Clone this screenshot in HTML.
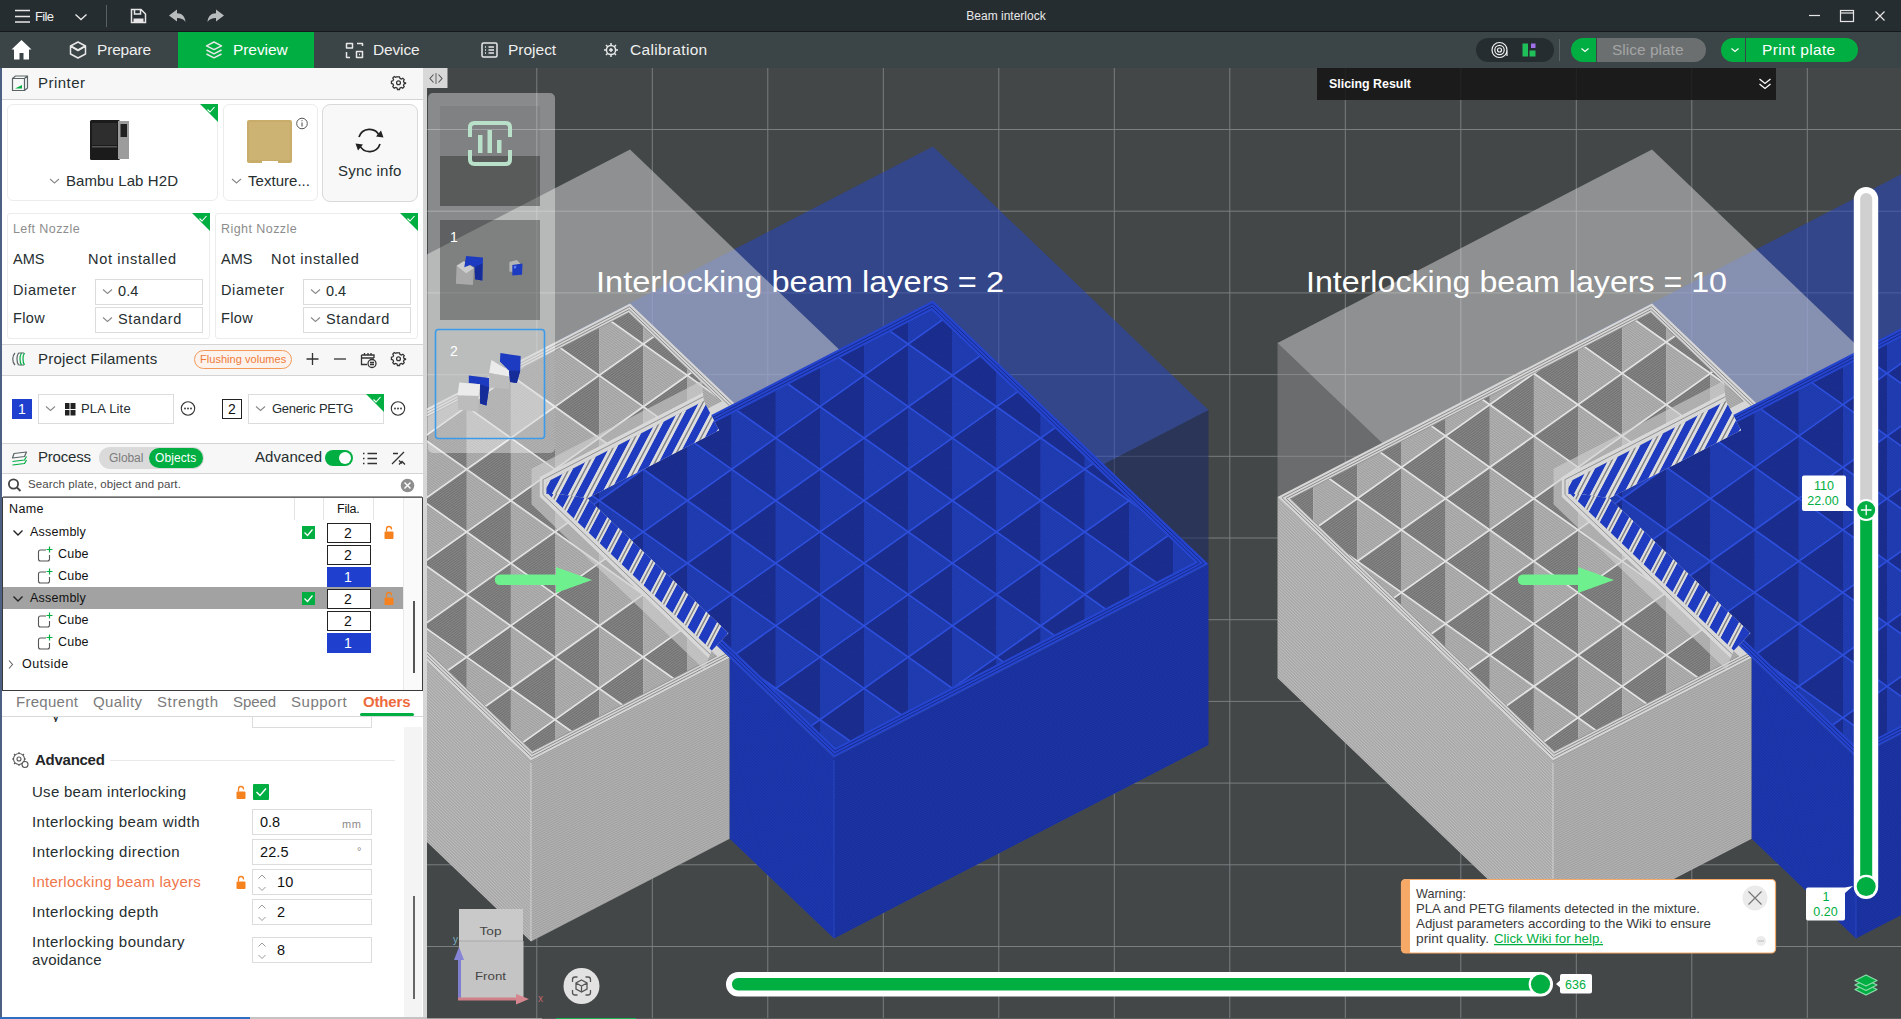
<!DOCTYPE html>
<html><head><meta charset="utf-8"><title>Beam interlock</title>
<style>
*{box-sizing:border-box;margin:0;padding:0}
html,body{width:1901px;height:1019px;overflow:hidden;background:#434748;font-family:"Liberation Sans",sans-serif;color:#262e30}
.abs{position:absolute}
#titlebar{left:0;top:0;width:1901px;height:32px;background:#262d30;border-bottom:1px solid #15191b}
#tabbar{left:0;top:32px;width:1901px;height:36px;background:#3b4446}
.t{position:absolute;white-space:nowrap;line-height:1}
#left{left:0;top:68px;width:427px;height:951px;background:#d6d6d6}
#leftin{left:2px;top:68px;width:421px;height:949px;background:#fff}
.hdr{position:absolute;left:2px;width:421px;background:#f7f7f7;border-bottom:1px solid #d4d4d4}
.card{position:absolute;border:1px solid #ececec;border-radius:6px;background:#fff}
.gc{position:absolute;width:0;height:0;border-top:18px solid #00ae42;border-left:18px solid transparent}
.dd{position:absolute;border:1px solid #dcdcdc;background:#fff}
.inp{position:absolute;left:252px;width:120px;height:26px;border:1px solid #dcdcdc;background:#fff}
svg{position:absolute;overflow:visible}
</style></head><body>
<!-- SCENE -->
<svg id="scene" style="left:427px;top:68px" width="1474" height="951" viewBox="427 68 1474 951">
<defs><pattern id="hgl" width="40" height="2.2" patternUnits="userSpaceOnUse" patternTransform="rotate(43.72460892256163)"><rect width="40" height="2.2" fill="#a4a4a4"/><rect width="40" height="1.0" fill="#bebebe"/></pattern><pattern id="hgr" width="40" height="2.0" patternUnits="userSpaceOnUse" patternTransform="rotate(-27.324897602688495)"><rect width="40" height="2.0" fill="#9f9f9f"/><rect width="40" height="1.0" fill="#b3b3b3"/></pattern><pattern id="hbl" width="40" height="2.2" patternUnits="userSpaceOnUse" patternTransform="rotate(43.72460892256163)"><rect width="40" height="2.2" fill="#1931a2"/><rect width="40" height="1.0" fill="#1e39b1"/></pattern><pattern id="hbr" width="40" height="2.0" patternUnits="userSpaceOnUse" patternTransform="rotate(-27.324897602688495)"><rect width="40" height="2.0" fill="#172d98"/><rect width="40" height="1.0" fill="#1d36a6"/></pattern><pattern id="hgd" width="40" height="2.0" patternUnits="userSpaceOnUse" patternTransform="rotate(-35.33461122477693)"><rect width="40" height="2.0" fill="#707070"/><rect width="40" height="1.0" fill="#888888"/></pattern><pattern id="hgt" width="40" height="2.0" patternUnits="userSpaceOnUse" patternTransform="rotate(35.33461122477693)"><rect width="40" height="2.0" fill="#9e9e9e"/><rect width="40" height="1.0" fill="#b4b4b4"/></pattern><pattern id="hbd" width="40" height="2.0" patternUnits="userSpaceOnUse" patternTransform="rotate(-35.33461122477693)"><rect width="40" height="2.0" fill="#182986"/><rect width="40" height="1.0" fill="#1c3094"/></pattern><pattern id="hbt" width="40" height="2.0" patternUnits="userSpaceOnUse" patternTransform="rotate(35.33461122477693)"><rect width="40" height="2.0" fill="#1d37a6"/><rect width="40" height="1.0" fill="#213fb8"/></pattern><clipPath id="cg0"><polygon points="628.7,312.6 268.3,498.8 532.3,751.4 716.9,656.0 545.7,492.3 721.5,401.4"/></clipPath><clipPath id="cb0"><polygon points="931.6,310.3 572.1,496.1 835.4,747.9 1194.9,562.1"/></clipPath><clipPath id="ci0"><polygon points="703.9,401.0 546.5,482.3 546.5,494.1 558.5,494.1 587.5,498.3 719.0,430.3"/></clipPath><clipPath id="cj0"><polygon points="546.5,494.1 546.5,492.3 711.8,650.5 728.4,633.1 587.5,498.3 558.5,494.1"/></clipPath><clipPath id="cg1"><polygon points="1650.7,312.6 1290.3,498.8 1554.3,751.4 1738.9,656.0 1567.7,492.3 1743.5,401.4"/></clipPath><clipPath id="cb1"><polygon points="1953.6,310.3 1594.1,496.1 1857.4,747.9 2216.9,562.1"/></clipPath><clipPath id="ci1"><polygon points="1725.9,401.0 1568.5,482.3 1568.5,494.1 1580.5,494.1 1609.5,498.3 1741.0,430.3"/></clipPath><clipPath id="cj1"><polygon points="1568.5,494.1 1568.5,492.3 1733.8,650.5 1750.4,633.1 1609.5,498.3 1580.5,494.1"/></clipPath></defs>
<path d="M536.8,68V1019M652.3,68V1019M767.8,68V1019M883.3,68V1019M998.8,68V1019M1114.3,68V1019M1229.8,68V1019M1345.3,68V1019M1460.8,68V1019M1576.3,68V1019M1691.8,68V1019M1807.3,68V1019M427,129.5H1901M427,211.2H1901M427,292.9H1901M427,374.6H1901M427,456.3H1901M427,538.0H1901M427,619.7H1901M427,701.4H1901M427,783.1H1901M427,864.8H1901M427,946.5H1901M427,1028.2H1901" stroke="#7a7e7f" stroke-width="1" fill="none"/>
<polygon points="834.0,603.6 1208.5,410.1 1208.5,564.1 834.0,757.6" fill="rgba(22,38,101,0.55)" />
<polygon points="933.0,146.6 558.5,340.1 834.0,603.6 1208.5,410.1" fill="rgba(38,69,192,0.55)" />
<polygon points="255.5,343.0 531.0,606.5 531.0,760.5 255.5,497.0" fill="rgba(145,145,145,0.5)" />
<polygon points="630.0,149.5 255.5,343.0 531.0,606.5 905.5,413.0" fill="rgba(217,217,217,0.5)" />
<polygon points="255.5,497.0 531.0,760.5 531.0,941.5 255.5,678.0" fill="url(#hgl)" />
<polygon points="531.0,760.5 729.7,657.8 729.7,838.8 531.0,941.5" fill="url(#hgr)" />
<path d="M531.0,763.5V941.5" stroke="#e8e8e8" stroke-width="1.2" stroke-dasharray="1,1"/>
<polygon points="630.0,303.5 255.5,497.0 531.0,760.5 729.7,657.8 558.5,494.1 734.3,403.3" fill="#d6d6d6" />
<g clip-path="url(#cg0)">
<path d="M113.5,218.9L157.7,187.6L157.7,250.2ZM113.5,281.5L157.7,250.2L157.7,312.8ZM113.5,344.1L157.7,312.8L157.7,375.4ZM113.5,406.7L157.7,375.4L157.7,438.0ZM113.5,469.3L157.7,438.0L157.7,500.6ZM113.5,531.9L157.7,500.6L157.7,563.2ZM113.5,594.5L157.7,563.2L157.7,625.8ZM113.5,657.1L157.7,625.8L157.7,688.4ZM113.5,719.7L157.7,688.4L157.7,751.0ZM113.5,782.3L157.7,751.0L157.7,813.6ZM113.5,844.9L157.7,813.6L157.7,876.2ZM157.7,250.2L201.8,218.9L201.8,281.5ZM157.7,312.8L201.8,281.5L201.8,344.1ZM157.7,375.4L201.8,344.1L201.8,406.7ZM157.7,438.0L201.8,406.7L201.8,469.3ZM157.7,500.6L201.8,469.3L201.8,531.9ZM157.7,563.2L201.8,531.9L201.8,594.5ZM157.7,625.8L201.8,594.5L201.8,657.1ZM157.7,688.4L201.8,657.1L201.8,719.7ZM157.7,751.0L201.8,719.7L201.8,782.3ZM157.7,813.6L201.8,782.3L201.8,844.9ZM201.8,218.9L246.0,187.6L246.0,250.2ZM201.8,281.5L246.0,250.2L246.0,312.8ZM201.8,344.1L246.0,312.8L246.0,375.4ZM201.8,406.7L246.0,375.4L246.0,438.0ZM201.8,469.3L246.0,438.0L246.0,500.6ZM201.8,531.9L246.0,500.6L246.0,563.2ZM201.8,594.5L246.0,563.2L246.0,625.8ZM201.8,657.1L246.0,625.8L246.0,688.4ZM201.8,719.7L246.0,688.4L246.0,751.0ZM201.8,782.3L246.0,751.0L246.0,813.6ZM201.8,844.9L246.0,813.6L246.0,876.2ZM246.0,250.2L290.1,218.9L290.1,281.5ZM246.0,312.8L290.1,281.5L290.1,344.1ZM246.0,375.4L290.1,344.1L290.1,406.7ZM246.0,438.0L290.1,406.7L290.1,469.3ZM246.0,500.6L290.1,469.3L290.1,531.9ZM246.0,563.2L290.1,531.9L290.1,594.5ZM246.0,625.8L290.1,594.5L290.1,657.1ZM246.0,688.4L290.1,657.1L290.1,719.7ZM246.0,751.0L290.1,719.7L290.1,782.3ZM246.0,813.6L290.1,782.3L290.1,844.9ZM290.1,218.9L334.3,187.6L334.3,250.2ZM290.1,281.5L334.3,250.2L334.3,312.8ZM290.1,344.1L334.3,312.8L334.3,375.4ZM290.1,406.7L334.3,375.4L334.3,438.0ZM290.1,469.3L334.3,438.0L334.3,500.6ZM290.1,531.9L334.3,500.6L334.3,563.2ZM290.1,594.5L334.3,563.2L334.3,625.8ZM290.1,657.1L334.3,625.8L334.3,688.4ZM290.1,719.7L334.3,688.4L334.3,751.0ZM290.1,782.3L334.3,751.0L334.3,813.6ZM290.1,844.9L334.3,813.6L334.3,876.2ZM334.3,250.2L378.4,218.9L378.4,281.5ZM334.3,312.8L378.4,281.5L378.4,344.1ZM334.3,375.4L378.4,344.1L378.4,406.7ZM334.3,438.0L378.4,406.7L378.4,469.3ZM334.3,500.6L378.4,469.3L378.4,531.9ZM334.3,563.2L378.4,531.9L378.4,594.5ZM334.3,625.8L378.4,594.5L378.4,657.1ZM334.3,688.4L378.4,657.1L378.4,719.7ZM334.3,751.0L378.4,719.7L378.4,782.3ZM334.3,813.6L378.4,782.3L378.4,844.9ZM378.4,218.9L422.6,187.6L422.6,250.2ZM378.4,281.5L422.6,250.2L422.6,312.8ZM378.4,344.1L422.6,312.8L422.6,375.4ZM378.4,406.7L422.6,375.4L422.6,438.0ZM378.4,469.3L422.6,438.0L422.6,500.6ZM378.4,531.9L422.6,500.6L422.6,563.2ZM378.4,594.5L422.6,563.2L422.6,625.8ZM378.4,657.1L422.6,625.8L422.6,688.4ZM378.4,719.7L422.6,688.4L422.6,751.0ZM378.4,782.3L422.6,751.0L422.6,813.6ZM378.4,844.9L422.6,813.6L422.6,876.2ZM422.6,250.2L466.8,218.9L466.8,281.5ZM422.6,312.8L466.8,281.5L466.8,344.1ZM422.6,375.4L466.8,344.1L466.8,406.7ZM422.6,438.0L466.8,406.7L466.8,469.3ZM422.6,500.6L466.8,469.3L466.8,531.9ZM422.6,563.2L466.8,531.9L466.8,594.5ZM422.6,625.8L466.8,594.5L466.8,657.1ZM422.6,688.4L466.8,657.1L466.8,719.7ZM422.6,751.0L466.8,719.7L466.8,782.3ZM422.6,813.6L466.8,782.3L466.8,844.9ZM466.8,218.9L510.9,187.6L510.9,250.2ZM466.8,281.5L510.9,250.2L510.9,312.8ZM466.8,344.1L510.9,312.8L510.9,375.4ZM466.8,406.7L510.9,375.4L510.9,438.0ZM466.8,469.3L510.9,438.0L510.9,500.6ZM466.8,531.9L510.9,500.6L510.9,563.2ZM466.8,594.5L510.9,563.2L510.9,625.8ZM466.8,657.1L510.9,625.8L510.9,688.4ZM466.8,719.7L510.9,688.4L510.9,751.0ZM466.8,782.3L510.9,751.0L510.9,813.6ZM466.8,844.9L510.9,813.6L510.9,876.2ZM510.9,250.2L555.0,218.9L555.0,281.5ZM510.9,312.8L555.0,281.5L555.0,344.1ZM510.9,375.4L555.0,344.1L555.0,406.7ZM510.9,438.0L555.0,406.7L555.0,469.3ZM510.9,500.6L555.0,469.3L555.0,531.9ZM510.9,563.2L555.0,531.9L555.0,594.5ZM510.9,625.8L555.0,594.5L555.0,657.1ZM510.9,688.4L555.0,657.1L555.0,719.7ZM510.9,751.0L555.0,719.7L555.0,782.3ZM510.9,813.6L555.0,782.3L555.0,844.9ZM555.0,218.9L599.2,187.6L599.2,250.2ZM555.0,281.5L599.2,250.2L599.2,312.8ZM555.0,344.1L599.2,312.8L599.2,375.4ZM555.0,406.7L599.2,375.4L599.2,438.0ZM555.0,469.3L599.2,438.0L599.2,500.6ZM555.0,531.9L599.2,500.6L599.2,563.2ZM555.0,594.5L599.2,563.2L599.2,625.8ZM555.0,657.1L599.2,625.8L599.2,688.4ZM555.0,719.7L599.2,688.4L599.2,751.0ZM555.0,782.3L599.2,751.0L599.2,813.6ZM555.0,844.9L599.2,813.6L599.2,876.2ZM599.2,250.2L643.3,218.9L643.3,281.5ZM599.2,312.8L643.3,281.5L643.3,344.1ZM599.2,375.4L643.3,344.1L643.3,406.7ZM599.2,438.0L643.3,406.7L643.3,469.3ZM599.2,500.6L643.3,469.3L643.3,531.9ZM599.2,563.2L643.3,531.9L643.3,594.5ZM599.2,625.8L643.3,594.5L643.3,657.1ZM599.2,688.4L643.3,657.1L643.3,719.7ZM599.2,751.0L643.3,719.7L643.3,782.3ZM599.2,813.6L643.3,782.3L643.3,844.9ZM643.4,218.9L687.5,187.6L687.5,250.2ZM643.4,281.5L687.5,250.2L687.5,312.8ZM643.4,344.1L687.5,312.8L687.5,375.4ZM643.4,406.7L687.5,375.4L687.5,438.0ZM643.4,469.3L687.5,438.0L687.5,500.6ZM643.4,531.9L687.5,500.6L687.5,563.2ZM643.4,594.5L687.5,563.2L687.5,625.8ZM643.4,657.1L687.5,625.8L687.5,688.4ZM643.4,719.7L687.5,688.4L687.5,751.0ZM643.4,782.3L687.5,751.0L687.5,813.6ZM643.4,844.9L687.5,813.6L687.5,876.2ZM687.5,250.2L731.6,218.9L731.6,281.5ZM687.5,312.8L731.6,281.5L731.6,344.1ZM687.5,375.4L731.6,344.1L731.6,406.7ZM687.5,438.0L731.6,406.7L731.6,469.3ZM687.5,500.6L731.6,469.3L731.6,531.9ZM687.5,563.2L731.6,531.9L731.6,594.5ZM687.5,625.8L731.6,594.5L731.6,657.1ZM687.5,688.4L731.6,657.1L731.6,719.7ZM687.5,751.0L731.6,719.7L731.6,782.3ZM687.5,813.6L731.6,782.3L731.6,844.9ZM731.6,218.9L775.8,187.6L775.8,250.2ZM731.6,281.5L775.8,250.2L775.8,312.8ZM731.6,344.1L775.8,312.8L775.8,375.4ZM731.6,406.7L775.8,375.4L775.8,438.0ZM731.6,469.3L775.8,438.0L775.8,500.6ZM731.6,531.9L775.8,500.6L775.8,563.2ZM731.6,594.5L775.8,563.2L775.8,625.8ZM731.6,657.1L775.8,625.8L775.8,688.4ZM731.6,719.7L775.8,688.4L775.8,751.0ZM731.6,782.3L775.8,751.0L775.8,813.6ZM731.6,844.9L775.8,813.6L775.8,876.2ZM775.8,250.2L820.0,218.9L820.0,281.5ZM775.8,312.8L820.0,281.5L820.0,344.1ZM775.8,375.4L820.0,344.1L820.0,406.7ZM775.8,438.0L820.0,406.7L820.0,469.3ZM775.8,500.6L820.0,469.3L820.0,531.9ZM775.8,563.2L820.0,531.9L820.0,594.5ZM775.8,625.8L820.0,594.5L820.0,657.1ZM775.8,688.4L820.0,657.1L820.0,719.7ZM775.8,751.0L820.0,719.7L820.0,782.3ZM775.8,813.6L820.0,782.3L820.0,844.9Z" fill="url(#hgd)"/>
<path d="M201.8,218.9L157.7,187.6L157.7,250.2ZM201.8,281.5L157.7,250.2L157.7,312.8ZM201.8,344.1L157.7,312.8L157.7,375.4ZM201.8,406.7L157.7,375.4L157.7,438.0ZM201.8,469.3L157.7,438.0L157.7,500.6ZM201.8,531.9L157.7,500.6L157.7,563.2ZM201.8,594.5L157.7,563.2L157.7,625.8ZM201.8,657.1L157.7,625.8L157.7,688.4ZM201.8,719.7L157.7,688.4L157.7,751.0ZM201.8,782.3L157.7,751.0L157.7,813.6ZM201.8,844.9L157.7,813.6L157.7,876.2ZM246.0,250.2L201.8,218.9L201.8,281.5ZM246.0,312.8L201.8,281.5L201.8,344.1ZM246.0,375.4L201.8,344.1L201.8,406.7ZM246.0,438.0L201.8,406.7L201.8,469.3ZM246.0,500.6L201.8,469.3L201.8,531.9ZM246.0,563.2L201.8,531.9L201.8,594.5ZM246.0,625.8L201.8,594.5L201.8,657.1ZM246.0,688.4L201.8,657.1L201.8,719.7ZM246.0,751.0L201.8,719.7L201.8,782.3ZM246.0,813.6L201.8,782.3L201.8,844.9ZM290.1,218.9L246.0,187.6L246.0,250.2ZM290.1,281.5L246.0,250.2L246.0,312.8ZM290.1,344.1L246.0,312.8L246.0,375.4ZM290.1,406.7L246.0,375.4L246.0,438.0ZM290.1,469.3L246.0,438.0L246.0,500.6ZM290.1,531.9L246.0,500.6L246.0,563.2ZM290.1,594.5L246.0,563.2L246.0,625.8ZM290.1,657.1L246.0,625.8L246.0,688.4ZM290.1,719.7L246.0,688.4L246.0,751.0ZM290.1,782.3L246.0,751.0L246.0,813.6ZM290.1,844.9L246.0,813.6L246.0,876.2ZM334.3,250.2L290.1,218.9L290.1,281.5ZM334.3,312.8L290.1,281.5L290.1,344.1ZM334.3,375.4L290.1,344.1L290.1,406.7ZM334.3,438.0L290.1,406.7L290.1,469.3ZM334.3,500.6L290.1,469.3L290.1,531.9ZM334.3,563.2L290.1,531.9L290.1,594.5ZM334.3,625.8L290.1,594.5L290.1,657.1ZM334.3,688.4L290.1,657.1L290.1,719.7ZM334.3,751.0L290.1,719.7L290.1,782.3ZM334.3,813.6L290.1,782.3L290.1,844.9ZM378.4,218.9L334.3,187.6L334.3,250.2ZM378.4,281.5L334.3,250.2L334.3,312.8ZM378.4,344.1L334.3,312.8L334.3,375.4ZM378.4,406.7L334.3,375.4L334.3,438.0ZM378.4,469.3L334.3,438.0L334.3,500.6ZM378.4,531.9L334.3,500.6L334.3,563.2ZM378.4,594.5L334.3,563.2L334.3,625.8ZM378.4,657.1L334.3,625.8L334.3,688.4ZM378.4,719.7L334.3,688.4L334.3,751.0ZM378.4,782.3L334.3,751.0L334.3,813.6ZM378.4,844.9L334.3,813.6L334.3,876.2ZM422.6,250.2L378.4,218.9L378.4,281.5ZM422.6,312.8L378.4,281.5L378.4,344.1ZM422.6,375.4L378.4,344.1L378.4,406.7ZM422.6,438.0L378.4,406.7L378.4,469.3ZM422.6,500.6L378.4,469.3L378.4,531.9ZM422.6,563.2L378.4,531.9L378.4,594.5ZM422.6,625.8L378.4,594.5L378.4,657.1ZM422.6,688.4L378.4,657.1L378.4,719.7ZM422.6,751.0L378.4,719.7L378.4,782.3ZM422.6,813.6L378.4,782.3L378.4,844.9ZM466.7,218.9L422.6,187.6L422.6,250.2ZM466.7,281.5L422.6,250.2L422.6,312.8ZM466.7,344.1L422.6,312.8L422.6,375.4ZM466.7,406.7L422.6,375.4L422.6,438.0ZM466.7,469.3L422.6,438.0L422.6,500.6ZM466.7,531.9L422.6,500.6L422.6,563.2ZM466.7,594.5L422.6,563.2L422.6,625.8ZM466.7,657.1L422.6,625.8L422.6,688.4ZM466.7,719.7L422.6,688.4L422.6,751.0ZM466.7,782.3L422.6,751.0L422.6,813.6ZM466.7,844.9L422.6,813.6L422.6,876.2ZM510.9,250.2L466.8,218.9L466.8,281.5ZM510.9,312.8L466.8,281.5L466.8,344.1ZM510.9,375.4L466.8,344.1L466.8,406.7ZM510.9,438.0L466.8,406.7L466.8,469.3ZM510.9,500.6L466.8,469.3L466.8,531.9ZM510.9,563.2L466.8,531.9L466.8,594.5ZM510.9,625.8L466.8,594.5L466.8,657.1ZM510.9,688.4L466.8,657.1L466.8,719.7ZM510.9,751.0L466.8,719.7L466.8,782.3ZM510.9,813.6L466.8,782.3L466.8,844.9ZM555.0,218.9L510.9,187.6L510.9,250.2ZM555.0,281.5L510.9,250.2L510.9,312.8ZM555.0,344.1L510.9,312.8L510.9,375.4ZM555.0,406.7L510.9,375.4L510.9,438.0ZM555.0,469.3L510.9,438.0L510.9,500.6ZM555.0,531.9L510.9,500.6L510.9,563.2ZM555.0,594.5L510.9,563.2L510.9,625.8ZM555.0,657.1L510.9,625.8L510.9,688.4ZM555.0,719.7L510.9,688.4L510.9,751.0ZM555.0,782.3L510.9,751.0L510.9,813.6ZM555.0,844.9L510.9,813.6L510.9,876.2ZM599.2,250.2L555.0,218.9L555.0,281.5ZM599.2,312.8L555.0,281.5L555.0,344.1ZM599.2,375.4L555.0,344.1L555.0,406.7ZM599.2,438.0L555.0,406.7L555.0,469.3ZM599.2,500.6L555.0,469.3L555.0,531.9ZM599.2,563.2L555.0,531.9L555.0,594.5ZM599.2,625.8L555.0,594.5L555.0,657.1ZM599.2,688.4L555.0,657.1L555.0,719.7ZM599.2,751.0L555.0,719.7L555.0,782.3ZM599.2,813.6L555.0,782.3L555.0,844.9ZM643.3,218.9L599.2,187.6L599.2,250.2ZM643.3,281.5L599.2,250.2L599.2,312.8ZM643.3,344.1L599.2,312.8L599.2,375.4ZM643.3,406.7L599.2,375.4L599.2,438.0ZM643.3,469.3L599.2,438.0L599.2,500.6ZM643.3,531.9L599.2,500.6L599.2,563.2ZM643.3,594.5L599.2,563.2L599.2,625.8ZM643.3,657.1L599.2,625.8L599.2,688.4ZM643.3,719.7L599.2,688.4L599.2,751.0ZM643.3,782.3L599.2,751.0L599.2,813.6ZM643.3,844.9L599.2,813.6L599.2,876.2ZM687.5,250.2L643.3,218.9L643.3,281.5ZM687.5,312.8L643.3,281.5L643.3,344.1ZM687.5,375.4L643.3,344.1L643.3,406.7ZM687.5,438.0L643.3,406.7L643.3,469.3ZM687.5,500.6L643.3,469.3L643.3,531.9ZM687.5,563.2L643.3,531.9L643.3,594.5ZM687.5,625.8L643.3,594.5L643.3,657.1ZM687.5,688.4L643.3,657.1L643.3,719.7ZM687.5,751.0L643.3,719.7L643.3,782.3ZM687.5,813.6L643.3,782.3L643.3,844.9ZM731.6,218.9L687.5,187.6L687.5,250.2ZM731.6,281.5L687.5,250.2L687.5,312.8ZM731.6,344.1L687.5,312.8L687.5,375.4ZM731.6,406.7L687.5,375.4L687.5,438.0ZM731.6,469.3L687.5,438.0L687.5,500.6ZM731.6,531.9L687.5,500.6L687.5,563.2ZM731.6,594.5L687.5,563.2L687.5,625.8ZM731.6,657.1L687.5,625.8L687.5,688.4ZM731.6,719.7L687.5,688.4L687.5,751.0ZM731.6,782.3L687.5,751.0L687.5,813.6ZM731.6,844.9L687.5,813.6L687.5,876.2ZM775.8,250.2L731.6,218.9L731.6,281.5ZM775.8,312.8L731.6,281.5L731.6,344.1ZM775.8,375.4L731.6,344.1L731.6,406.7ZM775.8,438.0L731.6,406.7L731.6,469.3ZM775.8,500.6L731.6,469.3L731.6,531.9ZM775.8,563.2L731.6,531.9L731.6,594.5ZM775.8,625.8L731.6,594.5L731.6,657.1ZM775.8,688.4L731.6,657.1L731.6,719.7ZM775.8,751.0L731.6,719.7L731.6,782.3ZM775.8,813.6L731.6,782.3L731.6,844.9ZM819.9,218.9L775.8,187.6L775.8,250.2ZM819.9,281.5L775.8,250.2L775.8,312.8ZM819.9,344.1L775.8,312.8L775.8,375.4ZM819.9,406.7L775.8,375.4L775.8,438.0ZM819.9,469.3L775.8,438.0L775.8,500.6ZM819.9,531.9L775.8,500.6L775.8,563.2ZM819.9,594.5L775.8,563.2L775.8,625.8ZM819.9,657.1L775.8,625.8L775.8,688.4ZM819.9,719.7L775.8,688.4L775.8,751.0ZM819.9,782.3L775.8,751.0L775.8,813.6ZM819.9,844.9L775.8,813.6L775.8,876.2ZM864.1,250.2L820.0,218.9L820.0,281.5ZM864.1,312.8L820.0,281.5L820.0,344.1ZM864.1,375.4L820.0,344.1L820.0,406.7ZM864.1,438.0L820.0,406.7L820.0,469.3ZM864.1,500.6L820.0,469.3L820.0,531.9ZM864.1,563.2L820.0,531.9L820.0,594.5ZM864.1,625.8L820.0,594.5L820.0,657.1ZM864.1,688.4L820.0,657.1L820.0,719.7ZM864.1,751.0L820.0,719.7L820.0,782.3ZM864.1,813.6L820.0,782.3L820.0,844.9Z" fill="url(#hgt)"/>
<path d="M264.3,-112.4L725.5,214.6M264.3,-49.8L725.5,277.2M264.3,12.8L725.5,339.8M264.3,75.4L725.5,402.4M264.3,138.0L725.5,465.0M264.3,200.6L725.5,527.6M264.3,263.2L725.5,590.2M264.3,325.8L725.5,652.8M264.3,388.4L725.5,715.4M264.3,451.0L725.5,778.0M264.3,513.6L725.5,840.6M264.3,576.2L725.5,903.2M264.3,638.8L725.5,965.8M264.3,701.4L725.5,1028.4M264.3,764.0L725.5,1091.0M264.3,826.6L725.5,1153.6M264.3,237.2L725.5,-89.8M264.3,299.8L725.5,-27.2M264.3,362.4L725.5,35.4M264.3,425.0L725.5,98.0M264.3,487.6L725.5,160.6M264.3,550.2L725.5,223.2M264.3,612.8L725.5,285.8M264.3,675.4L725.5,348.4M264.3,738.0L725.5,411.0M264.3,800.6L725.5,473.6M264.3,863.2L725.5,536.2M264.3,925.8L725.5,598.8M264.3,988.4L725.5,661.4M264.3,1051.0L725.5,724.0M264.3,1113.6L725.5,786.6M264.3,1176.2L725.5,849.2" stroke="#e3e3e3" stroke-width="1.7" fill="none"/>
</g>
<polyline points="731.9,404.5 629.5,306.7 259.9,497.6 531.5,757.3 727.7,655.9" fill="none" stroke="#8c8c8c" stroke-width="1"/>
<polyline points="729.5,405.7 629.1,309.7 264.2,498.3 531.9,754.3 725.8,654.1" fill="none" stroke="#8c8c8c" stroke-width="1"/>
<polyline points="721.5,401.4 628.7,312.6 268.3,498.8 532.3,751.4 716.9,656.0" fill="none" stroke="#8c8c8c" stroke-width="0.8"/>
<polygon points="729.7,657.8 834.0,757.6 834.0,938.6 729.7,838.8" fill="url(#hbl)" />
<polygon points="834.0,757.6 1208.5,564.1 1208.5,745.1 834.0,938.6" fill="url(#hbr)" />
<path d="M834.0,760.6V938.6" stroke="#3353d8" stroke-width="1.2" stroke-dasharray="1,1"/>
<polygon points="933.0,300.6 558.5,494.1 834.0,757.6 1208.5,564.1" fill="#2545cf" />
<g clip-path="url(#cb0)">
<path d="M422.6,250.2L466.8,218.9L466.8,281.5ZM422.6,312.8L466.8,281.5L466.8,344.1ZM422.6,375.4L466.8,344.1L466.8,406.7ZM422.6,438.0L466.8,406.7L466.8,469.3ZM422.6,500.6L466.8,469.3L466.8,531.9ZM422.6,563.2L466.8,531.9L466.8,594.5ZM422.6,625.8L466.8,594.5L466.8,657.1ZM422.6,688.4L466.8,657.1L466.8,719.7ZM422.6,751.0L466.8,719.7L466.8,782.3ZM422.6,813.6L466.8,782.3L466.8,844.9ZM466.8,218.9L510.9,187.6L510.9,250.2ZM466.8,281.5L510.9,250.2L510.9,312.8ZM466.8,344.1L510.9,312.8L510.9,375.4ZM466.8,406.7L510.9,375.4L510.9,438.0ZM466.8,469.3L510.9,438.0L510.9,500.6ZM466.8,531.9L510.9,500.6L510.9,563.2ZM466.8,594.5L510.9,563.2L510.9,625.8ZM466.8,657.1L510.9,625.8L510.9,688.4ZM466.8,719.7L510.9,688.4L510.9,751.0ZM466.8,782.3L510.9,751.0L510.9,813.6ZM466.8,844.9L510.9,813.6L510.9,876.2ZM510.9,250.2L555.0,218.9L555.0,281.5ZM510.9,312.8L555.0,281.5L555.0,344.1ZM510.9,375.4L555.0,344.1L555.0,406.7ZM510.9,438.0L555.0,406.7L555.0,469.3ZM510.9,500.6L555.0,469.3L555.0,531.9ZM510.9,563.2L555.0,531.9L555.0,594.5ZM510.9,625.8L555.0,594.5L555.0,657.1ZM510.9,688.4L555.0,657.1L555.0,719.7ZM510.9,751.0L555.0,719.7L555.0,782.3ZM510.9,813.6L555.0,782.3L555.0,844.9ZM555.0,218.9L599.2,187.6L599.2,250.2ZM555.0,281.5L599.2,250.2L599.2,312.8ZM555.0,344.1L599.2,312.8L599.2,375.4ZM555.0,406.7L599.2,375.4L599.2,438.0ZM555.0,469.3L599.2,438.0L599.2,500.6ZM555.0,531.9L599.2,500.6L599.2,563.2ZM555.0,594.5L599.2,563.2L599.2,625.8ZM555.0,657.1L599.2,625.8L599.2,688.4ZM555.0,719.7L599.2,688.4L599.2,751.0ZM555.0,782.3L599.2,751.0L599.2,813.6ZM555.0,844.9L599.2,813.6L599.2,876.2ZM599.2,250.2L643.3,218.9L643.3,281.5ZM599.2,312.8L643.3,281.5L643.3,344.1ZM599.2,375.4L643.3,344.1L643.3,406.7ZM599.2,438.0L643.3,406.7L643.3,469.3ZM599.2,500.6L643.3,469.3L643.3,531.9ZM599.2,563.2L643.3,531.9L643.3,594.5ZM599.2,625.8L643.3,594.5L643.3,657.1ZM599.2,688.4L643.3,657.1L643.3,719.7ZM599.2,751.0L643.3,719.7L643.3,782.3ZM599.2,813.6L643.3,782.3L643.3,844.9ZM643.4,218.9L687.5,187.6L687.5,250.2ZM643.4,281.5L687.5,250.2L687.5,312.8ZM643.4,344.1L687.5,312.8L687.5,375.4ZM643.4,406.7L687.5,375.4L687.5,438.0ZM643.4,469.3L687.5,438.0L687.5,500.6ZM643.4,531.9L687.5,500.6L687.5,563.2ZM643.4,594.5L687.5,563.2L687.5,625.8ZM643.4,657.1L687.5,625.8L687.5,688.4ZM643.4,719.7L687.5,688.4L687.5,751.0ZM643.4,782.3L687.5,751.0L687.5,813.6ZM643.4,844.9L687.5,813.6L687.5,876.2ZM687.5,250.2L731.6,218.9L731.6,281.5ZM687.5,312.8L731.6,281.5L731.6,344.1ZM687.5,375.4L731.6,344.1L731.6,406.7ZM687.5,438.0L731.6,406.7L731.6,469.3ZM687.5,500.6L731.6,469.3L731.6,531.9ZM687.5,563.2L731.6,531.9L731.6,594.5ZM687.5,625.8L731.6,594.5L731.6,657.1ZM687.5,688.4L731.6,657.1L731.6,719.7ZM687.5,751.0L731.6,719.7L731.6,782.3ZM687.5,813.6L731.6,782.3L731.6,844.9ZM731.6,218.9L775.8,187.6L775.8,250.2ZM731.6,281.5L775.8,250.2L775.8,312.8ZM731.6,344.1L775.8,312.8L775.8,375.4ZM731.6,406.7L775.8,375.4L775.8,438.0ZM731.6,469.3L775.8,438.0L775.8,500.6ZM731.6,531.9L775.8,500.6L775.8,563.2ZM731.6,594.5L775.8,563.2L775.8,625.8ZM731.6,657.1L775.8,625.8L775.8,688.4ZM731.6,719.7L775.8,688.4L775.8,751.0ZM731.6,782.3L775.8,751.0L775.8,813.6ZM731.6,844.9L775.8,813.6L775.8,876.2ZM775.8,250.2L820.0,218.9L820.0,281.5ZM775.8,312.8L820.0,281.5L820.0,344.1ZM775.8,375.4L820.0,344.1L820.0,406.7ZM775.8,438.0L820.0,406.7L820.0,469.3ZM775.8,500.6L820.0,469.3L820.0,531.9ZM775.8,563.2L820.0,531.9L820.0,594.5ZM775.8,625.8L820.0,594.5L820.0,657.1ZM775.8,688.4L820.0,657.1L820.0,719.7ZM775.8,751.0L820.0,719.7L820.0,782.3ZM775.8,813.6L820.0,782.3L820.0,844.9ZM819.9,218.9L864.1,187.6L864.1,250.2ZM819.9,281.5L864.1,250.2L864.1,312.8ZM819.9,344.1L864.1,312.8L864.1,375.4ZM819.9,406.7L864.1,375.4L864.1,438.0ZM819.9,469.3L864.1,438.0L864.1,500.6ZM819.9,531.9L864.1,500.6L864.1,563.2ZM819.9,594.5L864.1,563.2L864.1,625.8ZM819.9,657.1L864.1,625.8L864.1,688.4ZM819.9,719.7L864.1,688.4L864.1,751.0ZM819.9,782.3L864.1,751.0L864.1,813.6ZM819.9,844.9L864.1,813.6L864.1,876.2ZM864.1,250.2L908.2,218.9L908.2,281.5ZM864.1,312.8L908.2,281.5L908.2,344.1ZM864.1,375.4L908.2,344.1L908.2,406.7ZM864.1,438.0L908.2,406.7L908.2,469.3ZM864.1,500.6L908.2,469.3L908.2,531.9ZM864.1,563.2L908.2,531.9L908.2,594.5ZM864.1,625.8L908.2,594.5L908.2,657.1ZM864.1,688.4L908.2,657.1L908.2,719.7ZM864.1,751.0L908.2,719.7L908.2,782.3ZM864.1,813.6L908.2,782.3L908.2,844.9ZM908.2,218.9L952.4,187.6L952.4,250.2ZM908.2,281.5L952.4,250.2L952.4,312.8ZM908.2,344.1L952.4,312.8L952.4,375.4ZM908.2,406.7L952.4,375.4L952.4,438.0ZM908.2,469.3L952.4,438.0L952.4,500.6ZM908.2,531.9L952.4,500.6L952.4,563.2ZM908.2,594.5L952.4,563.2L952.4,625.8ZM908.2,657.1L952.4,625.8L952.4,688.4ZM908.2,719.7L952.4,688.4L952.4,751.0ZM908.2,782.3L952.4,751.0L952.4,813.6ZM908.2,844.9L952.4,813.6L952.4,876.2ZM952.4,250.2L996.5,218.9L996.5,281.5ZM952.4,312.8L996.5,281.5L996.5,344.1ZM952.4,375.4L996.5,344.1L996.5,406.7ZM952.4,438.0L996.5,406.7L996.5,469.3ZM952.4,500.6L996.5,469.3L996.5,531.9ZM952.4,563.2L996.5,531.9L996.5,594.5ZM952.4,625.8L996.5,594.5L996.5,657.1ZM952.4,688.4L996.5,657.1L996.5,719.7ZM952.4,751.0L996.5,719.7L996.5,782.3ZM952.4,813.6L996.5,782.3L996.5,844.9ZM996.5,218.9L1040.7,187.6L1040.7,250.2ZM996.5,281.5L1040.7,250.2L1040.7,312.8ZM996.5,344.1L1040.7,312.8L1040.7,375.4ZM996.5,406.7L1040.7,375.4L1040.7,438.0ZM996.5,469.3L1040.7,438.0L1040.7,500.6ZM996.5,531.9L1040.7,500.6L1040.7,563.2ZM996.5,594.5L1040.7,563.2L1040.7,625.8ZM996.5,657.1L1040.7,625.8L1040.7,688.4ZM996.5,719.7L1040.7,688.4L1040.7,751.0ZM996.5,782.3L1040.7,751.0L1040.7,813.6ZM996.5,844.9L1040.7,813.6L1040.7,876.2ZM1040.7,250.2L1084.8,218.9L1084.8,281.5ZM1040.7,312.8L1084.8,281.5L1084.8,344.1ZM1040.7,375.4L1084.8,344.1L1084.8,406.7ZM1040.7,438.0L1084.8,406.7L1084.8,469.3ZM1040.7,500.6L1084.8,469.3L1084.8,531.9ZM1040.7,563.2L1084.8,531.9L1084.8,594.5ZM1040.7,625.8L1084.8,594.5L1084.8,657.1ZM1040.7,688.4L1084.8,657.1L1084.8,719.7ZM1040.7,751.0L1084.8,719.7L1084.8,782.3ZM1040.7,813.6L1084.8,782.3L1084.8,844.9ZM1084.8,218.9L1129.0,187.6L1129.0,250.2ZM1084.8,281.5L1129.0,250.2L1129.0,312.8ZM1084.8,344.1L1129.0,312.8L1129.0,375.4ZM1084.8,406.7L1129.0,375.4L1129.0,438.0ZM1084.8,469.3L1129.0,438.0L1129.0,500.6ZM1084.8,531.9L1129.0,500.6L1129.0,563.2ZM1084.8,594.5L1129.0,563.2L1129.0,625.8ZM1084.8,657.1L1129.0,625.8L1129.0,688.4ZM1084.8,719.7L1129.0,688.4L1129.0,751.0ZM1084.8,782.3L1129.0,751.0L1129.0,813.6ZM1084.8,844.9L1129.0,813.6L1129.0,876.2ZM1129.0,250.2L1173.2,218.9L1173.2,281.5ZM1129.0,312.8L1173.2,281.5L1173.2,344.1ZM1129.0,375.4L1173.2,344.1L1173.2,406.7ZM1129.0,438.0L1173.2,406.7L1173.2,469.3ZM1129.0,500.6L1173.2,469.3L1173.2,531.9ZM1129.0,563.2L1173.2,531.9L1173.2,594.5ZM1129.0,625.8L1173.2,594.5L1173.2,657.1ZM1129.0,688.4L1173.2,657.1L1173.2,719.7ZM1129.0,751.0L1173.2,719.7L1173.2,782.3ZM1129.0,813.6L1173.2,782.3L1173.2,844.9ZM1173.1,218.9L1217.3,187.6L1217.3,250.2ZM1173.1,281.5L1217.3,250.2L1217.3,312.8ZM1173.1,344.1L1217.3,312.8L1217.3,375.4ZM1173.1,406.7L1217.3,375.4L1217.3,438.0ZM1173.1,469.3L1217.3,438.0L1217.3,500.6ZM1173.1,531.9L1217.3,500.6L1217.3,563.2ZM1173.1,594.5L1217.3,563.2L1217.3,625.8ZM1173.1,657.1L1217.3,625.8L1217.3,688.4ZM1173.1,719.7L1217.3,688.4L1217.3,751.0ZM1173.1,782.3L1217.3,751.0L1217.3,813.6ZM1173.1,844.9L1217.3,813.6L1217.3,876.2ZM1217.3,250.2L1261.4,218.9L1261.4,281.5ZM1217.3,312.8L1261.4,281.5L1261.4,344.1ZM1217.3,375.4L1261.4,344.1L1261.4,406.7ZM1217.3,438.0L1261.4,406.7L1261.4,469.3ZM1217.3,500.6L1261.4,469.3L1261.4,531.9ZM1217.3,563.2L1261.4,531.9L1261.4,594.5ZM1217.3,625.8L1261.4,594.5L1261.4,657.1ZM1217.3,688.4L1261.4,657.1L1261.4,719.7ZM1217.3,751.0L1261.4,719.7L1261.4,782.3ZM1217.3,813.6L1261.4,782.3L1261.4,844.9ZM1261.4,218.9L1305.6,187.6L1305.6,250.2ZM1261.4,281.5L1305.6,250.2L1305.6,312.8ZM1261.4,344.1L1305.6,312.8L1305.6,375.4ZM1261.4,406.7L1305.6,375.4L1305.6,438.0ZM1261.4,469.3L1305.6,438.0L1305.6,500.6ZM1261.4,531.9L1305.6,500.6L1305.6,563.2ZM1261.4,594.5L1305.6,563.2L1305.6,625.8ZM1261.4,657.1L1305.6,625.8L1305.6,688.4ZM1261.4,719.7L1305.6,688.4L1305.6,751.0ZM1261.4,782.3L1305.6,751.0L1305.6,813.6ZM1261.4,844.9L1305.6,813.6L1305.6,876.2Z" fill="url(#hbd)"/>
<path d="M510.9,250.2L466.8,218.9L466.8,281.5ZM510.9,312.8L466.8,281.5L466.8,344.1ZM510.9,375.4L466.8,344.1L466.8,406.7ZM510.9,438.0L466.8,406.7L466.8,469.3ZM510.9,500.6L466.8,469.3L466.8,531.9ZM510.9,563.2L466.8,531.9L466.8,594.5ZM510.9,625.8L466.8,594.5L466.8,657.1ZM510.9,688.4L466.8,657.1L466.8,719.7ZM510.9,751.0L466.8,719.7L466.8,782.3ZM510.9,813.6L466.8,782.3L466.8,844.9ZM555.0,218.9L510.9,187.6L510.9,250.2ZM555.0,281.5L510.9,250.2L510.9,312.8ZM555.0,344.1L510.9,312.8L510.9,375.4ZM555.0,406.7L510.9,375.4L510.9,438.0ZM555.0,469.3L510.9,438.0L510.9,500.6ZM555.0,531.9L510.9,500.6L510.9,563.2ZM555.0,594.5L510.9,563.2L510.9,625.8ZM555.0,657.1L510.9,625.8L510.9,688.4ZM555.0,719.7L510.9,688.4L510.9,751.0ZM555.0,782.3L510.9,751.0L510.9,813.6ZM555.0,844.9L510.9,813.6L510.9,876.2ZM599.2,250.2L555.0,218.9L555.0,281.5ZM599.2,312.8L555.0,281.5L555.0,344.1ZM599.2,375.4L555.0,344.1L555.0,406.7ZM599.2,438.0L555.0,406.7L555.0,469.3ZM599.2,500.6L555.0,469.3L555.0,531.9ZM599.2,563.2L555.0,531.9L555.0,594.5ZM599.2,625.8L555.0,594.5L555.0,657.1ZM599.2,688.4L555.0,657.1L555.0,719.7ZM599.2,751.0L555.0,719.7L555.0,782.3ZM599.2,813.6L555.0,782.3L555.0,844.9ZM643.3,218.9L599.2,187.6L599.2,250.2ZM643.3,281.5L599.2,250.2L599.2,312.8ZM643.3,344.1L599.2,312.8L599.2,375.4ZM643.3,406.7L599.2,375.4L599.2,438.0ZM643.3,469.3L599.2,438.0L599.2,500.6ZM643.3,531.9L599.2,500.6L599.2,563.2ZM643.3,594.5L599.2,563.2L599.2,625.8ZM643.3,657.1L599.2,625.8L599.2,688.4ZM643.3,719.7L599.2,688.4L599.2,751.0ZM643.3,782.3L599.2,751.0L599.2,813.6ZM643.3,844.9L599.2,813.6L599.2,876.2ZM687.5,250.2L643.3,218.9L643.3,281.5ZM687.5,312.8L643.3,281.5L643.3,344.1ZM687.5,375.4L643.3,344.1L643.3,406.7ZM687.5,438.0L643.3,406.7L643.3,469.3ZM687.5,500.6L643.3,469.3L643.3,531.9ZM687.5,563.2L643.3,531.9L643.3,594.5ZM687.5,625.8L643.3,594.5L643.3,657.1ZM687.5,688.4L643.3,657.1L643.3,719.7ZM687.5,751.0L643.3,719.7L643.3,782.3ZM687.5,813.6L643.3,782.3L643.3,844.9ZM731.6,218.9L687.5,187.6L687.5,250.2ZM731.6,281.5L687.5,250.2L687.5,312.8ZM731.6,344.1L687.5,312.8L687.5,375.4ZM731.6,406.7L687.5,375.4L687.5,438.0ZM731.6,469.3L687.5,438.0L687.5,500.6ZM731.6,531.9L687.5,500.6L687.5,563.2ZM731.6,594.5L687.5,563.2L687.5,625.8ZM731.6,657.1L687.5,625.8L687.5,688.4ZM731.6,719.7L687.5,688.4L687.5,751.0ZM731.6,782.3L687.5,751.0L687.5,813.6ZM731.6,844.9L687.5,813.6L687.5,876.2ZM775.8,250.2L731.6,218.9L731.6,281.5ZM775.8,312.8L731.6,281.5L731.6,344.1ZM775.8,375.4L731.6,344.1L731.6,406.7ZM775.8,438.0L731.6,406.7L731.6,469.3ZM775.8,500.6L731.6,469.3L731.6,531.9ZM775.8,563.2L731.6,531.9L731.6,594.5ZM775.8,625.8L731.6,594.5L731.6,657.1ZM775.8,688.4L731.6,657.1L731.6,719.7ZM775.8,751.0L731.6,719.7L731.6,782.3ZM775.8,813.6L731.6,782.3L731.6,844.9ZM819.9,218.9L775.8,187.6L775.8,250.2ZM819.9,281.5L775.8,250.2L775.8,312.8ZM819.9,344.1L775.8,312.8L775.8,375.4ZM819.9,406.7L775.8,375.4L775.8,438.0ZM819.9,469.3L775.8,438.0L775.8,500.6ZM819.9,531.9L775.8,500.6L775.8,563.2ZM819.9,594.5L775.8,563.2L775.8,625.8ZM819.9,657.1L775.8,625.8L775.8,688.4ZM819.9,719.7L775.8,688.4L775.8,751.0ZM819.9,782.3L775.8,751.0L775.8,813.6ZM819.9,844.9L775.8,813.6L775.8,876.2ZM864.1,250.2L820.0,218.9L820.0,281.5ZM864.1,312.8L820.0,281.5L820.0,344.1ZM864.1,375.4L820.0,344.1L820.0,406.7ZM864.1,438.0L820.0,406.7L820.0,469.3ZM864.1,500.6L820.0,469.3L820.0,531.9ZM864.1,563.2L820.0,531.9L820.0,594.5ZM864.1,625.8L820.0,594.5L820.0,657.1ZM864.1,688.4L820.0,657.1L820.0,719.7ZM864.1,751.0L820.0,719.7L820.0,782.3ZM864.1,813.6L820.0,782.3L820.0,844.9ZM908.2,218.9L864.1,187.6L864.1,250.2ZM908.2,281.5L864.1,250.2L864.1,312.8ZM908.2,344.1L864.1,312.8L864.1,375.4ZM908.2,406.7L864.1,375.4L864.1,438.0ZM908.2,469.3L864.1,438.0L864.1,500.6ZM908.2,531.9L864.1,500.6L864.1,563.2ZM908.2,594.5L864.1,563.2L864.1,625.8ZM908.2,657.1L864.1,625.8L864.1,688.4ZM908.2,719.7L864.1,688.4L864.1,751.0ZM908.2,782.3L864.1,751.0L864.1,813.6ZM908.2,844.9L864.1,813.6L864.1,876.2ZM952.4,250.2L908.2,218.9L908.2,281.5ZM952.4,312.8L908.2,281.5L908.2,344.1ZM952.4,375.4L908.2,344.1L908.2,406.7ZM952.4,438.0L908.2,406.7L908.2,469.3ZM952.4,500.6L908.2,469.3L908.2,531.9ZM952.4,563.2L908.2,531.9L908.2,594.5ZM952.4,625.8L908.2,594.5L908.2,657.1ZM952.4,688.4L908.2,657.1L908.2,719.7ZM952.4,751.0L908.2,719.7L908.2,782.3ZM952.4,813.6L908.2,782.3L908.2,844.9ZM996.5,218.9L952.4,187.6L952.4,250.2ZM996.5,281.5L952.4,250.2L952.4,312.8ZM996.5,344.1L952.4,312.8L952.4,375.4ZM996.5,406.7L952.4,375.4L952.4,438.0ZM996.5,469.3L952.4,438.0L952.4,500.6ZM996.5,531.9L952.4,500.6L952.4,563.2ZM996.5,594.5L952.4,563.2L952.4,625.8ZM996.5,657.1L952.4,625.8L952.4,688.4ZM996.5,719.7L952.4,688.4L952.4,751.0ZM996.5,782.3L952.4,751.0L952.4,813.6ZM996.5,844.9L952.4,813.6L952.4,876.2ZM1040.7,250.2L996.5,218.9L996.5,281.5ZM1040.7,312.8L996.5,281.5L996.5,344.1ZM1040.7,375.4L996.5,344.1L996.5,406.7ZM1040.7,438.0L996.5,406.7L996.5,469.3ZM1040.7,500.6L996.5,469.3L996.5,531.9ZM1040.7,563.2L996.5,531.9L996.5,594.5ZM1040.7,625.8L996.5,594.5L996.5,657.1ZM1040.7,688.4L996.5,657.1L996.5,719.7ZM1040.7,751.0L996.5,719.7L996.5,782.3ZM1040.7,813.6L996.5,782.3L996.5,844.9ZM1084.8,218.9L1040.7,187.6L1040.7,250.2ZM1084.8,281.5L1040.7,250.2L1040.7,312.8ZM1084.8,344.1L1040.7,312.8L1040.7,375.4ZM1084.8,406.7L1040.7,375.4L1040.7,438.0ZM1084.8,469.3L1040.7,438.0L1040.7,500.6ZM1084.8,531.9L1040.7,500.6L1040.7,563.2ZM1084.8,594.5L1040.7,563.2L1040.7,625.8ZM1084.8,657.1L1040.7,625.8L1040.7,688.4ZM1084.8,719.7L1040.7,688.4L1040.7,751.0ZM1084.8,782.3L1040.7,751.0L1040.7,813.6ZM1084.8,844.9L1040.7,813.6L1040.7,876.2ZM1129.0,250.2L1084.8,218.9L1084.8,281.5ZM1129.0,312.8L1084.8,281.5L1084.8,344.1ZM1129.0,375.4L1084.8,344.1L1084.8,406.7ZM1129.0,438.0L1084.8,406.7L1084.8,469.3ZM1129.0,500.6L1084.8,469.3L1084.8,531.9ZM1129.0,563.2L1084.8,531.9L1084.8,594.5ZM1129.0,625.8L1084.8,594.5L1084.8,657.1ZM1129.0,688.4L1084.8,657.1L1084.8,719.7ZM1129.0,751.0L1084.8,719.7L1084.8,782.3ZM1129.0,813.6L1084.8,782.3L1084.8,844.9ZM1173.2,218.9L1129.0,187.6L1129.0,250.2ZM1173.2,281.5L1129.0,250.2L1129.0,312.8ZM1173.2,344.1L1129.0,312.8L1129.0,375.4ZM1173.2,406.7L1129.0,375.4L1129.0,438.0ZM1173.2,469.3L1129.0,438.0L1129.0,500.6ZM1173.2,531.9L1129.0,500.6L1129.0,563.2ZM1173.2,594.5L1129.0,563.2L1129.0,625.8ZM1173.2,657.1L1129.0,625.8L1129.0,688.4ZM1173.2,719.7L1129.0,688.4L1129.0,751.0ZM1173.2,782.3L1129.0,751.0L1129.0,813.6ZM1173.2,844.9L1129.0,813.6L1129.0,876.2ZM1217.3,250.2L1173.2,218.9L1173.2,281.5ZM1217.3,312.8L1173.2,281.5L1173.2,344.1ZM1217.3,375.4L1173.2,344.1L1173.2,406.7ZM1217.3,438.0L1173.2,406.7L1173.2,469.3ZM1217.3,500.6L1173.2,469.3L1173.2,531.9ZM1217.3,563.2L1173.2,531.9L1173.2,594.5ZM1217.3,625.8L1173.2,594.5L1173.2,657.1ZM1217.3,688.4L1173.2,657.1L1173.2,719.7ZM1217.3,751.0L1173.2,719.7L1173.2,782.3ZM1217.3,813.6L1173.2,782.3L1173.2,844.9ZM1261.5,218.9L1217.3,187.6L1217.3,250.2ZM1261.5,281.5L1217.3,250.2L1217.3,312.8ZM1261.5,344.1L1217.3,312.8L1217.3,375.4ZM1261.5,406.7L1217.3,375.4L1217.3,438.0ZM1261.5,469.3L1217.3,438.0L1217.3,500.6ZM1261.5,531.9L1217.3,500.6L1217.3,563.2ZM1261.5,594.5L1217.3,563.2L1217.3,625.8ZM1261.5,657.1L1217.3,625.8L1217.3,688.4ZM1261.5,719.7L1217.3,688.4L1217.3,751.0ZM1261.5,782.3L1217.3,751.0L1217.3,813.6ZM1261.5,844.9L1217.3,813.6L1217.3,876.2ZM1305.6,250.2L1261.4,218.9L1261.4,281.5ZM1305.6,312.8L1261.4,281.5L1261.4,344.1ZM1305.6,375.4L1261.4,344.1L1261.4,406.7ZM1305.6,438.0L1261.4,406.7L1261.4,469.3ZM1305.6,500.6L1261.4,469.3L1261.4,531.9ZM1305.6,563.2L1261.4,531.9L1261.4,594.5ZM1305.6,625.8L1261.4,594.5L1261.4,657.1ZM1305.6,688.4L1261.4,657.1L1261.4,719.7ZM1305.6,751.0L1261.4,719.7L1261.4,782.3ZM1305.6,813.6L1261.4,782.3L1261.4,844.9ZM1349.8,218.9L1305.6,187.6L1305.6,250.2ZM1349.8,281.5L1305.6,250.2L1305.6,312.8ZM1349.8,344.1L1305.6,312.8L1305.6,375.4ZM1349.8,406.7L1305.6,375.4L1305.6,438.0ZM1349.8,469.3L1305.6,438.0L1305.6,500.6ZM1349.8,531.9L1305.6,500.6L1305.6,563.2ZM1349.8,594.5L1305.6,563.2L1305.6,625.8ZM1349.8,657.1L1305.6,625.8L1305.6,688.4ZM1349.8,719.7L1305.6,688.4L1305.6,751.0ZM1349.8,782.3L1305.6,751.0L1305.6,813.6ZM1349.8,844.9L1305.6,813.6L1305.6,876.2Z" fill="url(#hbt)"/>
<path d="M568.1,-210.0L1198.9,237.1M568.1,-147.4L1198.9,299.7M568.1,-84.8L1198.9,362.3M568.1,-22.2L1198.9,424.9M568.1,40.4L1198.9,487.5M568.1,103.0L1198.9,550.1M568.1,165.6L1198.9,612.7M568.1,228.2L1198.9,675.3M568.1,290.8L1198.9,737.9M568.1,353.4L1198.9,800.5M568.1,416.0L1198.9,863.1M568.1,478.6L1198.9,925.7M568.1,541.2L1198.9,988.3M568.1,603.8L1198.9,1050.9M568.1,666.4L1198.9,1113.5M568.1,729.0L1198.9,1176.1M568.1,791.6L1198.9,1238.7M568.1,854.2L1198.9,1301.3M568.1,209.6L1198.9,-237.5M568.1,272.2L1198.9,-174.9M568.1,334.8L1198.9,-112.3M568.1,397.4L1198.9,-49.7M568.1,460.0L1198.9,12.9M568.1,522.6L1198.9,75.5M568.1,585.2L1198.9,138.1M568.1,647.8L1198.9,200.7M568.1,710.4L1198.9,263.3M568.1,773.0L1198.9,325.9M568.1,835.6L1198.9,388.5M568.1,898.2L1198.9,451.1M568.1,960.8L1198.9,513.7M568.1,1023.4L1198.9,576.3M568.1,1086.0L1198.9,638.9M568.1,1148.6L1198.9,701.5M568.1,1211.2L1198.9,764.1M568.1,1273.8L1198.9,826.7" stroke="#2c4edb" stroke-width="1.7" fill="none"/>
</g>
<polygon points="932.5,303.9 563.1,494.8 834.5,754.3 1203.9,563.4" fill="none" stroke="#17298a" stroke-width="1"/>
<polygon points="932.1,307.2 567.7,495.4 834.9,751.0 1199.3,562.8" fill="none" stroke="#17298a" stroke-width="1"/>
<polygon points="702.2,380.4 531.5,468.7 531.5,504.3 704.5,669.7 708.5,658.3 539.5,496.7 539.5,476.9 702.9,392.5" fill="rgba(208,208,208,0.6)" />
<polygon points="702.9,392.5 539.5,476.9 539.5,496.7 708.5,658.3 711.8,650.5 546.5,492.3 546.5,482.3 703.9,401.0" fill="#d8d8d8" />
<polyline points="703.4,396.7 543.0,479.6 543.0,494.5 710.2,654.4" fill="none" stroke="#8a8a8a" stroke-width="0.9"/>
<polygon points="703.9,401.0 546.5,482.3 546.5,494.1 558.5,494.1 587.5,498.3 719.0,430.3" fill="#d2d2d2" />
<g clip-path="url(#ci0)">
<path d="M511.6,397.0L520.6,397.0L465.2,502.3L456.2,502.3ZM528.1,397.0L537.1,397.0L481.7,502.3L472.7,502.3ZM544.6,397.0L553.6,397.0L498.2,502.3L489.2,502.3ZM561.1,397.0L570.1,397.0L514.7,502.3L505.7,502.3ZM577.6,397.0L586.6,397.0L531.2,502.3L522.2,502.3ZM594.1,397.0L603.1,397.0L547.7,502.3L538.7,502.3ZM610.6,397.0L619.6,397.0L564.2,502.3L555.2,502.3ZM627.1,397.0L636.1,397.0L580.7,502.3L571.7,502.3ZM643.6,397.0L652.6,397.0L597.2,502.3L588.2,502.3ZM660.1,397.0L669.1,397.0L613.7,502.3L604.7,502.3ZM676.6,397.0L685.6,397.0L630.2,502.3L621.2,502.3ZM693.1,397.0L702.1,397.0L646.7,502.3L637.7,502.3ZM709.6,397.0L718.6,397.0L663.2,502.3L654.2,502.3ZM726.1,397.0L735.1,397.0L679.7,502.3L670.7,502.3ZM742.6,397.0L751.6,397.0L696.2,502.3L687.2,502.3ZM759.1,397.0L768.1,397.0L712.7,502.3L703.7,502.3ZM775.6,397.0L784.6,397.0L729.2,502.3L720.2,502.3ZM792.1,397.0L801.1,397.0L745.7,502.3L736.7,502.3ZM808.6,397.0L817.6,397.0L762.2,502.3L753.2,502.3Z" fill="#1f3cc0"/>
<path d="M520.6,397.0L523.6,397.0L468.2,502.3L465.2,502.3ZM525.1,397.0L528.1,397.0L472.7,502.3L469.7,502.3ZM537.1,397.0L540.1,397.0L484.7,502.3L481.7,502.3ZM541.6,397.0L544.6,397.0L489.2,502.3L486.2,502.3ZM553.6,397.0L556.6,397.0L501.2,502.3L498.2,502.3ZM558.1,397.0L561.1,397.0L505.7,502.3L502.7,502.3ZM570.1,397.0L573.1,397.0L517.7,502.3L514.7,502.3ZM574.6,397.0L577.6,397.0L522.2,502.3L519.2,502.3ZM586.6,397.0L589.6,397.0L534.2,502.3L531.2,502.3ZM591.1,397.0L594.1,397.0L538.7,502.3L535.7,502.3ZM603.1,397.0L606.1,397.0L550.7,502.3L547.7,502.3ZM607.6,397.0L610.6,397.0L555.2,502.3L552.2,502.3ZM619.6,397.0L622.6,397.0L567.2,502.3L564.2,502.3ZM624.1,397.0L627.1,397.0L571.7,502.3L568.7,502.3ZM636.1,397.0L639.1,397.0L583.7,502.3L580.7,502.3ZM640.6,397.0L643.6,397.0L588.2,502.3L585.2,502.3ZM652.6,397.0L655.6,397.0L600.2,502.3L597.2,502.3ZM657.1,397.0L660.1,397.0L604.7,502.3L601.7,502.3ZM669.1,397.0L672.1,397.0L616.7,502.3L613.7,502.3ZM673.6,397.0L676.6,397.0L621.2,502.3L618.2,502.3ZM685.6,397.0L688.6,397.0L633.2,502.3L630.2,502.3ZM690.1,397.0L693.1,397.0L637.7,502.3L634.7,502.3ZM702.1,397.0L705.1,397.0L649.7,502.3L646.7,502.3ZM706.6,397.0L709.6,397.0L654.2,502.3L651.2,502.3ZM718.6,397.0L721.6,397.0L666.2,502.3L663.2,502.3ZM723.1,397.0L726.1,397.0L670.7,502.3L667.7,502.3ZM735.1,397.0L738.1,397.0L682.7,502.3L679.7,502.3ZM739.6,397.0L742.6,397.0L687.2,502.3L684.2,502.3ZM751.6,397.0L754.6,397.0L699.2,502.3L696.2,502.3ZM756.1,397.0L759.1,397.0L703.7,502.3L700.7,502.3ZM768.1,397.0L771.1,397.0L715.7,502.3L712.7,502.3ZM772.6,397.0L775.6,397.0L720.2,502.3L717.2,502.3ZM784.6,397.0L787.6,397.0L732.2,502.3L729.2,502.3ZM789.1,397.0L792.1,397.0L736.7,502.3L733.7,502.3ZM801.1,397.0L804.1,397.0L748.7,502.3L745.7,502.3ZM805.6,397.0L808.6,397.0L753.2,502.3L750.2,502.3ZM817.6,397.0L820.6,397.0L765.2,502.3L762.2,502.3ZM822.1,397.0L825.1,397.0L769.7,502.3L766.7,502.3Z" fill="#dedede"/>
<path d="M523.6,397.0L525.1,397.0L469.7,502.3L468.2,502.3ZM540.1,397.0L541.6,397.0L486.2,502.3L484.7,502.3ZM556.6,397.0L558.1,397.0L502.7,502.3L501.2,502.3ZM573.1,397.0L574.6,397.0L519.2,502.3L517.7,502.3ZM589.6,397.0L591.1,397.0L535.7,502.3L534.2,502.3ZM606.1,397.0L607.6,397.0L552.2,502.3L550.7,502.3ZM622.6,397.0L624.1,397.0L568.7,502.3L567.2,502.3ZM639.1,397.0L640.6,397.0L585.2,502.3L583.7,502.3ZM655.6,397.0L657.1,397.0L601.7,502.3L600.2,502.3ZM672.1,397.0L673.6,397.0L618.2,502.3L616.7,502.3ZM688.6,397.0L690.1,397.0L634.7,502.3L633.2,502.3ZM705.1,397.0L706.6,397.0L651.2,502.3L649.7,502.3ZM721.6,397.0L723.1,397.0L667.7,502.3L666.2,502.3ZM738.1,397.0L739.6,397.0L684.2,502.3L682.7,502.3ZM754.6,397.0L756.1,397.0L700.7,502.3L699.2,502.3ZM771.1,397.0L772.6,397.0L717.2,502.3L715.7,502.3ZM787.6,397.0L789.1,397.0L733.7,502.3L732.2,502.3ZM804.1,397.0L805.6,397.0L750.2,502.3L748.7,502.3ZM820.6,397.0L822.1,397.0L766.7,502.3L765.2,502.3Z" fill="#808080"/>
</g>
<polygon points="546.5,494.1 546.5,492.3 711.8,650.5 728.4,633.1 587.5,498.3 558.5,494.1" fill="#d2d2d2" />
<g clip-path="url(#cj0)">
<path d="M513.0,488.3L523.6,488.3L436.2,654.5L425.6,654.5ZM529.5,488.3L540.1,488.3L452.7,654.5L442.1,654.5ZM546.0,488.3L556.6,488.3L469.2,654.5L458.6,654.5ZM562.5,488.3L573.1,488.3L485.7,654.5L475.1,654.5ZM579.0,488.3L589.6,488.3L502.2,654.5L491.6,654.5ZM595.5,488.3L606.1,488.3L518.7,654.5L508.1,654.5ZM612.0,488.3L622.6,488.3L535.2,654.5L524.6,654.5ZM628.5,488.3L639.1,488.3L551.7,654.5L541.1,654.5ZM645.0,488.3L655.6,488.3L568.2,654.5L557.6,654.5ZM661.5,488.3L672.1,488.3L584.7,654.5L574.1,654.5ZM678.0,488.3L688.6,488.3L601.2,654.5L590.6,654.5ZM694.5,488.3L705.1,488.3L617.7,654.5L607.1,654.5ZM711.0,488.3L721.6,488.3L634.2,654.5L623.6,654.5ZM727.5,488.3L738.1,488.3L650.7,654.5L640.1,654.5ZM744.0,488.3L754.6,488.3L667.2,654.5L656.6,654.5ZM760.5,488.3L771.1,488.3L683.7,654.5L673.1,654.5ZM777.0,488.3L787.6,488.3L700.2,654.5L689.6,654.5ZM793.5,488.3L804.1,488.3L716.7,654.5L706.1,654.5ZM810.0,488.3L820.6,488.3L733.2,654.5L722.6,654.5ZM826.5,488.3L837.1,488.3L749.7,654.5L739.1,654.5ZM843.0,488.3L853.6,488.3L766.2,654.5L755.6,654.5Z" fill="#1f3cc0"/>
<path d="M523.6,488.3L525.8,488.3L438.4,654.5L436.2,654.5ZM527.3,488.3L529.5,488.3L442.1,654.5L439.9,654.5ZM540.1,488.3L542.3,488.3L454.9,654.5L452.7,654.5ZM543.8,488.3L546.0,488.3L458.6,654.5L456.4,654.5ZM556.6,488.3L558.8,488.3L471.4,654.5L469.2,654.5ZM560.3,488.3L562.5,488.3L475.1,654.5L472.9,654.5ZM573.1,488.3L575.3,488.3L487.9,654.5L485.7,654.5ZM576.8,488.3L579.0,488.3L491.6,654.5L489.4,654.5ZM589.6,488.3L591.8,488.3L504.4,654.5L502.2,654.5ZM593.3,488.3L595.5,488.3L508.1,654.5L505.9,654.5ZM606.1,488.3L608.3,488.3L520.9,654.5L518.7,654.5ZM609.8,488.3L612.0,488.3L524.6,654.5L522.4,654.5ZM622.6,488.3L624.8,488.3L537.4,654.5L535.2,654.5ZM626.3,488.3L628.5,488.3L541.1,654.5L538.9,654.5ZM639.1,488.3L641.3,488.3L553.9,654.5L551.7,654.5ZM642.8,488.3L645.0,488.3L557.6,654.5L555.4,654.5ZM655.6,488.3L657.8,488.3L570.4,654.5L568.2,654.5ZM659.3,488.3L661.5,488.3L574.1,654.5L571.9,654.5ZM672.1,488.3L674.3,488.3L586.9,654.5L584.7,654.5ZM675.8,488.3L678.0,488.3L590.6,654.5L588.4,654.5ZM688.6,488.3L690.8,488.3L603.4,654.5L601.2,654.5ZM692.3,488.3L694.5,488.3L607.1,654.5L604.9,654.5ZM705.1,488.3L707.3,488.3L619.9,654.5L617.7,654.5ZM708.8,488.3L711.0,488.3L623.6,654.5L621.4,654.5ZM721.6,488.3L723.8,488.3L636.4,654.5L634.2,654.5ZM725.3,488.3L727.5,488.3L640.1,654.5L637.9,654.5ZM738.1,488.3L740.3,488.3L652.9,654.5L650.7,654.5ZM741.8,488.3L744.0,488.3L656.6,654.5L654.4,654.5ZM754.6,488.3L756.8,488.3L669.4,654.5L667.2,654.5ZM758.3,488.3L760.5,488.3L673.1,654.5L670.9,654.5ZM771.1,488.3L773.3,488.3L685.9,654.5L683.7,654.5ZM774.8,488.3L777.0,488.3L689.6,654.5L687.4,654.5ZM787.6,488.3L789.8,488.3L702.4,654.5L700.2,654.5ZM791.3,488.3L793.5,488.3L706.1,654.5L703.9,654.5ZM804.1,488.3L806.3,488.3L718.9,654.5L716.7,654.5ZM807.8,488.3L810.0,488.3L722.6,654.5L720.4,654.5ZM820.6,488.3L822.8,488.3L735.4,654.5L733.2,654.5ZM824.3,488.3L826.5,488.3L739.1,654.5L736.9,654.5ZM837.1,488.3L839.3,488.3L751.9,654.5L749.7,654.5ZM840.8,488.3L843.0,488.3L755.6,654.5L753.4,654.5ZM853.6,488.3L855.8,488.3L768.4,654.5L766.2,654.5ZM857.3,488.3L859.5,488.3L772.1,654.5L769.9,654.5Z" fill="#dedede"/>
<path d="M525.8,488.3L527.3,488.3L439.9,654.5L438.4,654.5ZM542.3,488.3L543.8,488.3L456.4,654.5L454.9,654.5ZM558.8,488.3L560.3,488.3L472.9,654.5L471.4,654.5ZM575.3,488.3L576.8,488.3L489.4,654.5L487.9,654.5ZM591.8,488.3L593.3,488.3L505.9,654.5L504.4,654.5ZM608.3,488.3L609.8,488.3L522.4,654.5L520.9,654.5ZM624.8,488.3L626.3,488.3L538.9,654.5L537.4,654.5ZM641.3,488.3L642.8,488.3L555.4,654.5L553.9,654.5ZM657.8,488.3L659.3,488.3L571.9,654.5L570.4,654.5ZM674.3,488.3L675.8,488.3L588.4,654.5L586.9,654.5ZM690.8,488.3L692.3,488.3L604.9,654.5L603.4,654.5ZM707.3,488.3L708.8,488.3L621.4,654.5L619.9,654.5ZM723.8,488.3L725.3,488.3L637.9,654.5L636.4,654.5ZM740.3,488.3L741.8,488.3L654.4,654.5L652.9,654.5ZM756.8,488.3L758.3,488.3L670.9,654.5L669.4,654.5ZM773.3,488.3L774.8,488.3L687.4,654.5L685.9,654.5ZM789.8,488.3L791.3,488.3L703.9,654.5L702.4,654.5ZM806.3,488.3L807.8,488.3L720.4,654.5L718.9,654.5ZM822.8,488.3L824.3,488.3L736.9,654.5L735.4,654.5ZM839.3,488.3L840.8,488.3L753.4,654.5L751.9,654.5ZM855.8,488.3L857.3,488.3L769.9,654.5L768.4,654.5Z" fill="#808080"/>
</g>
<polygon points="1856.0,603.6 2230.5,410.1 2230.5,564.1 1856.0,757.6" fill="rgba(22,38,101,0.55)" />
<polygon points="1955.0,146.6 1580.5,340.1 1856.0,603.6 2230.5,410.1" fill="rgba(38,69,192,0.55)" />
<polygon points="1277.5,343.0 1553.0,606.5 1553.0,760.5 1277.5,497.0" fill="rgba(145,145,145,0.5)" />
<polygon points="1652.0,149.5 1277.5,343.0 1553.0,606.5 1927.5,413.0" fill="rgba(217,217,217,0.5)" />
<polygon points="1277.5,497.0 1553.0,760.5 1553.0,941.5 1277.5,678.0" fill="url(#hgl)" />
<polygon points="1553.0,760.5 1751.7,657.8 1751.7,838.8 1553.0,941.5" fill="url(#hgr)" />
<path d="M1553.0,763.5V941.5" stroke="#e8e8e8" stroke-width="1.2" stroke-dasharray="1,1"/>
<polygon points="1652.0,303.5 1277.5,497.0 1553.0,760.5 1751.7,657.8 1580.5,494.1 1756.3,403.3" fill="#d6d6d6" />
<g clip-path="url(#cg1)">
<path d="M1136.5,216.9L1180.7,185.6L1180.7,248.2ZM1136.5,279.5L1180.7,248.2L1180.7,310.8ZM1136.5,342.1L1180.7,310.8L1180.7,373.4ZM1136.5,404.7L1180.7,373.4L1180.7,436.0ZM1136.5,467.3L1180.7,436.0L1180.7,498.6ZM1136.5,529.9L1180.7,498.6L1180.7,561.2ZM1136.5,592.5L1180.7,561.2L1180.7,623.8ZM1136.5,655.1L1180.7,623.8L1180.7,686.4ZM1136.5,717.7L1180.7,686.4L1180.7,749.0ZM1136.5,780.3L1180.7,749.0L1180.7,811.6ZM1136.5,842.9L1180.7,811.6L1180.7,874.2ZM1180.7,248.2L1224.9,216.9L1224.9,279.5ZM1180.7,310.8L1224.9,279.5L1224.9,342.1ZM1180.7,373.4L1224.9,342.1L1224.9,404.7ZM1180.7,436.0L1224.9,404.7L1224.9,467.3ZM1180.7,498.6L1224.9,467.3L1224.9,529.9ZM1180.7,561.2L1224.9,529.9L1224.9,592.5ZM1180.7,623.8L1224.9,592.5L1224.9,655.1ZM1180.7,686.4L1224.9,655.1L1224.9,717.7ZM1180.7,749.0L1224.9,717.7L1224.9,780.3ZM1180.7,811.6L1224.9,780.3L1224.9,842.9ZM1224.8,216.9L1269.0,185.6L1269.0,248.2ZM1224.8,279.5L1269.0,248.2L1269.0,310.8ZM1224.8,342.1L1269.0,310.8L1269.0,373.4ZM1224.8,404.7L1269.0,373.4L1269.0,436.0ZM1224.8,467.3L1269.0,436.0L1269.0,498.6ZM1224.8,529.9L1269.0,498.6L1269.0,561.2ZM1224.8,592.5L1269.0,561.2L1269.0,623.8ZM1224.8,655.1L1269.0,623.8L1269.0,686.4ZM1224.8,717.7L1269.0,686.4L1269.0,749.0ZM1224.8,780.3L1269.0,749.0L1269.0,811.6ZM1224.8,842.9L1269.0,811.6L1269.0,874.2ZM1269.0,248.2L1313.2,216.9L1313.2,279.5ZM1269.0,310.8L1313.2,279.5L1313.2,342.1ZM1269.0,373.4L1313.2,342.1L1313.2,404.7ZM1269.0,436.0L1313.2,404.7L1313.2,467.3ZM1269.0,498.6L1313.2,467.3L1313.2,529.9ZM1269.0,561.2L1313.2,529.9L1313.2,592.5ZM1269.0,623.8L1313.2,592.5L1313.2,655.1ZM1269.0,686.4L1313.2,655.1L1313.2,717.7ZM1269.0,749.0L1313.2,717.7L1313.2,780.3ZM1269.0,811.6L1313.2,780.3L1313.2,842.9ZM1313.2,216.9L1357.3,185.6L1357.3,248.2ZM1313.2,279.5L1357.3,248.2L1357.3,310.8ZM1313.2,342.1L1357.3,310.8L1357.3,373.4ZM1313.2,404.7L1357.3,373.4L1357.3,436.0ZM1313.2,467.3L1357.3,436.0L1357.3,498.6ZM1313.2,529.9L1357.3,498.6L1357.3,561.2ZM1313.2,592.5L1357.3,561.2L1357.3,623.8ZM1313.2,655.1L1357.3,623.8L1357.3,686.4ZM1313.2,717.7L1357.3,686.4L1357.3,749.0ZM1313.2,780.3L1357.3,749.0L1357.3,811.6ZM1313.2,842.9L1357.3,811.6L1357.3,874.2ZM1357.3,248.2L1401.5,216.9L1401.5,279.5ZM1357.3,310.8L1401.5,279.5L1401.5,342.1ZM1357.3,373.4L1401.5,342.1L1401.5,404.7ZM1357.3,436.0L1401.5,404.7L1401.5,467.3ZM1357.3,498.6L1401.5,467.3L1401.5,529.9ZM1357.3,561.2L1401.5,529.9L1401.5,592.5ZM1357.3,623.8L1401.5,592.5L1401.5,655.1ZM1357.3,686.4L1401.5,655.1L1401.5,717.7ZM1357.3,749.0L1401.5,717.7L1401.5,780.3ZM1357.3,811.6L1401.5,780.3L1401.5,842.9ZM1401.5,216.9L1445.6,185.6L1445.6,248.2ZM1401.5,279.5L1445.6,248.2L1445.6,310.8ZM1401.5,342.1L1445.6,310.8L1445.6,373.4ZM1401.5,404.7L1445.6,373.4L1445.6,436.0ZM1401.5,467.3L1445.6,436.0L1445.6,498.6ZM1401.5,529.9L1445.6,498.6L1445.6,561.2ZM1401.5,592.5L1445.6,561.2L1445.6,623.8ZM1401.5,655.1L1445.6,623.8L1445.6,686.4ZM1401.5,717.7L1445.6,686.4L1445.6,749.0ZM1401.5,780.3L1445.6,749.0L1445.6,811.6ZM1401.5,842.9L1445.6,811.6L1445.6,874.2ZM1445.6,248.2L1489.8,216.9L1489.8,279.5ZM1445.6,310.8L1489.8,279.5L1489.8,342.1ZM1445.6,373.4L1489.8,342.1L1489.8,404.7ZM1445.6,436.0L1489.8,404.7L1489.8,467.3ZM1445.6,498.6L1489.8,467.3L1489.8,529.9ZM1445.6,561.2L1489.8,529.9L1489.8,592.5ZM1445.6,623.8L1489.8,592.5L1489.8,655.1ZM1445.6,686.4L1489.8,655.1L1489.8,717.7ZM1445.6,749.0L1489.8,717.7L1489.8,780.3ZM1445.6,811.6L1489.8,780.3L1489.8,842.9ZM1489.8,216.9L1533.9,185.6L1533.9,248.2ZM1489.8,279.5L1533.9,248.2L1533.9,310.8ZM1489.8,342.1L1533.9,310.8L1533.9,373.4ZM1489.8,404.7L1533.9,373.4L1533.9,436.0ZM1489.8,467.3L1533.9,436.0L1533.9,498.6ZM1489.8,529.9L1533.9,498.6L1533.9,561.2ZM1489.8,592.5L1533.9,561.2L1533.9,623.8ZM1489.8,655.1L1533.9,623.8L1533.9,686.4ZM1489.8,717.7L1533.9,686.4L1533.9,749.0ZM1489.8,780.3L1533.9,749.0L1533.9,811.6ZM1489.8,842.9L1533.9,811.6L1533.9,874.2ZM1533.9,248.2L1578.1,216.9L1578.1,279.5ZM1533.9,310.8L1578.1,279.5L1578.1,342.1ZM1533.9,373.4L1578.1,342.1L1578.1,404.7ZM1533.9,436.0L1578.1,404.7L1578.1,467.3ZM1533.9,498.6L1578.1,467.3L1578.1,529.9ZM1533.9,561.2L1578.1,529.9L1578.1,592.5ZM1533.9,623.8L1578.1,592.5L1578.1,655.1ZM1533.9,686.4L1578.1,655.1L1578.1,717.7ZM1533.9,749.0L1578.1,717.7L1578.1,780.3ZM1533.9,811.6L1578.1,780.3L1578.1,842.9ZM1578.0,216.9L1622.2,185.6L1622.2,248.2ZM1578.0,279.5L1622.2,248.2L1622.2,310.8ZM1578.0,342.1L1622.2,310.8L1622.2,373.4ZM1578.0,404.7L1622.2,373.4L1622.2,436.0ZM1578.0,467.3L1622.2,436.0L1622.2,498.6ZM1578.0,529.9L1622.2,498.6L1622.2,561.2ZM1578.0,592.5L1622.2,561.2L1622.2,623.8ZM1578.0,655.1L1622.2,623.8L1622.2,686.4ZM1578.0,717.7L1622.2,686.4L1622.2,749.0ZM1578.0,780.3L1622.2,749.0L1622.2,811.6ZM1578.0,842.9L1622.2,811.6L1622.2,874.2ZM1622.2,248.2L1666.4,216.9L1666.4,279.5ZM1622.2,310.8L1666.4,279.5L1666.4,342.1ZM1622.2,373.4L1666.4,342.1L1666.4,404.7ZM1622.2,436.0L1666.4,404.7L1666.4,467.3ZM1622.2,498.6L1666.4,467.3L1666.4,529.9ZM1622.2,561.2L1666.4,529.9L1666.4,592.5ZM1622.2,623.8L1666.4,592.5L1666.4,655.1ZM1622.2,686.4L1666.4,655.1L1666.4,717.7ZM1622.2,749.0L1666.4,717.7L1666.4,780.3ZM1622.2,811.6L1666.4,780.3L1666.4,842.9ZM1666.3,216.9L1710.5,185.6L1710.5,248.2ZM1666.3,279.5L1710.5,248.2L1710.5,310.8ZM1666.3,342.1L1710.5,310.8L1710.5,373.4ZM1666.3,404.7L1710.5,373.4L1710.5,436.0ZM1666.3,467.3L1710.5,436.0L1710.5,498.6ZM1666.3,529.9L1710.5,498.6L1710.5,561.2ZM1666.3,592.5L1710.5,561.2L1710.5,623.8ZM1666.3,655.1L1710.5,623.8L1710.5,686.4ZM1666.3,717.7L1710.5,686.4L1710.5,749.0ZM1666.3,780.3L1710.5,749.0L1710.5,811.6ZM1666.3,842.9L1710.5,811.6L1710.5,874.2ZM1710.5,248.2L1754.7,216.9L1754.7,279.5ZM1710.5,310.8L1754.7,279.5L1754.7,342.1ZM1710.5,373.4L1754.7,342.1L1754.7,404.7ZM1710.5,436.0L1754.7,404.7L1754.7,467.3ZM1710.5,498.6L1754.7,467.3L1754.7,529.9ZM1710.5,561.2L1754.7,529.9L1754.7,592.5ZM1710.5,623.8L1754.7,592.5L1754.7,655.1ZM1710.5,686.4L1754.7,655.1L1754.7,717.7ZM1710.5,749.0L1754.7,717.7L1754.7,780.3ZM1710.5,811.6L1754.7,780.3L1754.7,842.9ZM1754.7,216.9L1798.8,185.6L1798.8,248.2ZM1754.7,279.5L1798.8,248.2L1798.8,310.8ZM1754.7,342.1L1798.8,310.8L1798.8,373.4ZM1754.7,404.7L1798.8,373.4L1798.8,436.0ZM1754.7,467.3L1798.8,436.0L1798.8,498.6ZM1754.7,529.9L1798.8,498.6L1798.8,561.2ZM1754.7,592.5L1798.8,561.2L1798.8,623.8ZM1754.7,655.1L1798.8,623.8L1798.8,686.4ZM1754.7,717.7L1798.8,686.4L1798.8,749.0ZM1754.7,780.3L1798.8,749.0L1798.8,811.6ZM1754.7,842.9L1798.8,811.6L1798.8,874.2ZM1798.8,248.2L1843.0,216.9L1843.0,279.5ZM1798.8,310.8L1843.0,279.5L1843.0,342.1ZM1798.8,373.4L1843.0,342.1L1843.0,404.7ZM1798.8,436.0L1843.0,404.7L1843.0,467.3ZM1798.8,498.6L1843.0,467.3L1843.0,529.9ZM1798.8,561.2L1843.0,529.9L1843.0,592.5ZM1798.8,623.8L1843.0,592.5L1843.0,655.1ZM1798.8,686.4L1843.0,655.1L1843.0,717.7ZM1798.8,749.0L1843.0,717.7L1843.0,780.3ZM1798.8,811.6L1843.0,780.3L1843.0,842.9Z" fill="url(#hgd)"/>
<path d="M1224.9,216.9L1180.7,185.6L1180.7,248.2ZM1224.9,279.5L1180.7,248.2L1180.7,310.8ZM1224.9,342.1L1180.7,310.8L1180.7,373.4ZM1224.9,404.7L1180.7,373.4L1180.7,436.0ZM1224.9,467.3L1180.7,436.0L1180.7,498.6ZM1224.9,529.9L1180.7,498.6L1180.7,561.2ZM1224.9,592.5L1180.7,561.2L1180.7,623.8ZM1224.9,655.1L1180.7,623.8L1180.7,686.4ZM1224.9,717.7L1180.7,686.4L1180.7,749.0ZM1224.9,780.3L1180.7,749.0L1180.7,811.6ZM1224.9,842.9L1180.7,811.6L1180.7,874.2ZM1269.0,248.2L1224.9,216.9L1224.9,279.5ZM1269.0,310.8L1224.9,279.5L1224.9,342.1ZM1269.0,373.4L1224.9,342.1L1224.9,404.7ZM1269.0,436.0L1224.9,404.7L1224.9,467.3ZM1269.0,498.6L1224.9,467.3L1224.9,529.9ZM1269.0,561.2L1224.9,529.9L1224.9,592.5ZM1269.0,623.8L1224.9,592.5L1224.9,655.1ZM1269.0,686.4L1224.9,655.1L1224.9,717.7ZM1269.0,749.0L1224.9,717.7L1224.9,780.3ZM1269.0,811.6L1224.9,780.3L1224.9,842.9ZM1313.2,216.9L1269.0,185.6L1269.0,248.2ZM1313.2,279.5L1269.0,248.2L1269.0,310.8ZM1313.2,342.1L1269.0,310.8L1269.0,373.4ZM1313.2,404.7L1269.0,373.4L1269.0,436.0ZM1313.2,467.3L1269.0,436.0L1269.0,498.6ZM1313.2,529.9L1269.0,498.6L1269.0,561.2ZM1313.2,592.5L1269.0,561.2L1269.0,623.8ZM1313.2,655.1L1269.0,623.8L1269.0,686.4ZM1313.2,717.7L1269.0,686.4L1269.0,749.0ZM1313.2,780.3L1269.0,749.0L1269.0,811.6ZM1313.2,842.9L1269.0,811.6L1269.0,874.2ZM1357.3,248.2L1313.2,216.9L1313.2,279.5ZM1357.3,310.8L1313.2,279.5L1313.2,342.1ZM1357.3,373.4L1313.2,342.1L1313.2,404.7ZM1357.3,436.0L1313.2,404.7L1313.2,467.3ZM1357.3,498.6L1313.2,467.3L1313.2,529.9ZM1357.3,561.2L1313.2,529.9L1313.2,592.5ZM1357.3,623.8L1313.2,592.5L1313.2,655.1ZM1357.3,686.4L1313.2,655.1L1313.2,717.7ZM1357.3,749.0L1313.2,717.7L1313.2,780.3ZM1357.3,811.6L1313.2,780.3L1313.2,842.9ZM1401.5,216.9L1357.3,185.6L1357.3,248.2ZM1401.5,279.5L1357.3,248.2L1357.3,310.8ZM1401.5,342.1L1357.3,310.8L1357.3,373.4ZM1401.5,404.7L1357.3,373.4L1357.3,436.0ZM1401.5,467.3L1357.3,436.0L1357.3,498.6ZM1401.5,529.9L1357.3,498.6L1357.3,561.2ZM1401.5,592.5L1357.3,561.2L1357.3,623.8ZM1401.5,655.1L1357.3,623.8L1357.3,686.4ZM1401.5,717.7L1357.3,686.4L1357.3,749.0ZM1401.5,780.3L1357.3,749.0L1357.3,811.6ZM1401.5,842.9L1357.3,811.6L1357.3,874.2ZM1445.6,248.2L1401.5,216.9L1401.5,279.5ZM1445.6,310.8L1401.5,279.5L1401.5,342.1ZM1445.6,373.4L1401.5,342.1L1401.5,404.7ZM1445.6,436.0L1401.5,404.7L1401.5,467.3ZM1445.6,498.6L1401.5,467.3L1401.5,529.9ZM1445.6,561.2L1401.5,529.9L1401.5,592.5ZM1445.6,623.8L1401.5,592.5L1401.5,655.1ZM1445.6,686.4L1401.5,655.1L1401.5,717.7ZM1445.6,749.0L1401.5,717.7L1401.5,780.3ZM1445.6,811.6L1401.5,780.3L1401.5,842.9ZM1489.8,216.9L1445.6,185.6L1445.6,248.2ZM1489.8,279.5L1445.6,248.2L1445.6,310.8ZM1489.8,342.1L1445.6,310.8L1445.6,373.4ZM1489.8,404.7L1445.6,373.4L1445.6,436.0ZM1489.8,467.3L1445.6,436.0L1445.6,498.6ZM1489.8,529.9L1445.6,498.6L1445.6,561.2ZM1489.8,592.5L1445.6,561.2L1445.6,623.8ZM1489.8,655.1L1445.6,623.8L1445.6,686.4ZM1489.8,717.7L1445.6,686.4L1445.6,749.0ZM1489.8,780.3L1445.6,749.0L1445.6,811.6ZM1489.8,842.9L1445.6,811.6L1445.6,874.2ZM1533.9,248.2L1489.8,216.9L1489.8,279.5ZM1533.9,310.8L1489.8,279.5L1489.8,342.1ZM1533.9,373.4L1489.8,342.1L1489.8,404.7ZM1533.9,436.0L1489.8,404.7L1489.8,467.3ZM1533.9,498.6L1489.8,467.3L1489.8,529.9ZM1533.9,561.2L1489.8,529.9L1489.8,592.5ZM1533.9,623.8L1489.8,592.5L1489.8,655.1ZM1533.9,686.4L1489.8,655.1L1489.8,717.7ZM1533.9,749.0L1489.8,717.7L1489.8,780.3ZM1533.9,811.6L1489.8,780.3L1489.8,842.9ZM1578.1,216.9L1533.9,185.6L1533.9,248.2ZM1578.1,279.5L1533.9,248.2L1533.9,310.8ZM1578.1,342.1L1533.9,310.8L1533.9,373.4ZM1578.1,404.7L1533.9,373.4L1533.9,436.0ZM1578.1,467.3L1533.9,436.0L1533.9,498.6ZM1578.1,529.9L1533.9,498.6L1533.9,561.2ZM1578.1,592.5L1533.9,561.2L1533.9,623.8ZM1578.1,655.1L1533.9,623.8L1533.9,686.4ZM1578.1,717.7L1533.9,686.4L1533.9,749.0ZM1578.1,780.3L1533.9,749.0L1533.9,811.6ZM1578.1,842.9L1533.9,811.6L1533.9,874.2ZM1622.2,248.2L1578.1,216.9L1578.1,279.5ZM1622.2,310.8L1578.1,279.5L1578.1,342.1ZM1622.2,373.4L1578.1,342.1L1578.1,404.7ZM1622.2,436.0L1578.1,404.7L1578.1,467.3ZM1622.2,498.6L1578.1,467.3L1578.1,529.9ZM1622.2,561.2L1578.1,529.9L1578.1,592.5ZM1622.2,623.8L1578.1,592.5L1578.1,655.1ZM1622.2,686.4L1578.1,655.1L1578.1,717.7ZM1622.2,749.0L1578.1,717.7L1578.1,780.3ZM1622.2,811.6L1578.1,780.3L1578.1,842.9ZM1666.4,216.9L1622.2,185.6L1622.2,248.2ZM1666.4,279.5L1622.2,248.2L1622.2,310.8ZM1666.4,342.1L1622.2,310.8L1622.2,373.4ZM1666.4,404.7L1622.2,373.4L1622.2,436.0ZM1666.4,467.3L1622.2,436.0L1622.2,498.6ZM1666.4,529.9L1622.2,498.6L1622.2,561.2ZM1666.4,592.5L1622.2,561.2L1622.2,623.8ZM1666.4,655.1L1622.2,623.8L1622.2,686.4ZM1666.4,717.7L1622.2,686.4L1622.2,749.0ZM1666.4,780.3L1622.2,749.0L1622.2,811.6ZM1666.4,842.9L1622.2,811.6L1622.2,874.2ZM1710.5,248.2L1666.4,216.9L1666.4,279.5ZM1710.5,310.8L1666.4,279.5L1666.4,342.1ZM1710.5,373.4L1666.4,342.1L1666.4,404.7ZM1710.5,436.0L1666.4,404.7L1666.4,467.3ZM1710.5,498.6L1666.4,467.3L1666.4,529.9ZM1710.5,561.2L1666.4,529.9L1666.4,592.5ZM1710.5,623.8L1666.4,592.5L1666.4,655.1ZM1710.5,686.4L1666.4,655.1L1666.4,717.7ZM1710.5,749.0L1666.4,717.7L1666.4,780.3ZM1710.5,811.6L1666.4,780.3L1666.4,842.9ZM1754.7,216.9L1710.5,185.6L1710.5,248.2ZM1754.7,279.5L1710.5,248.2L1710.5,310.8ZM1754.7,342.1L1710.5,310.8L1710.5,373.4ZM1754.7,404.7L1710.5,373.4L1710.5,436.0ZM1754.7,467.3L1710.5,436.0L1710.5,498.6ZM1754.7,529.9L1710.5,498.6L1710.5,561.2ZM1754.7,592.5L1710.5,561.2L1710.5,623.8ZM1754.7,655.1L1710.5,623.8L1710.5,686.4ZM1754.7,717.7L1710.5,686.4L1710.5,749.0ZM1754.7,780.3L1710.5,749.0L1710.5,811.6ZM1754.7,842.9L1710.5,811.6L1710.5,874.2ZM1798.8,248.2L1754.7,216.9L1754.7,279.5ZM1798.8,310.8L1754.7,279.5L1754.7,342.1ZM1798.8,373.4L1754.7,342.1L1754.7,404.7ZM1798.8,436.0L1754.7,404.7L1754.7,467.3ZM1798.8,498.6L1754.7,467.3L1754.7,529.9ZM1798.8,561.2L1754.7,529.9L1754.7,592.5ZM1798.8,623.8L1754.7,592.5L1754.7,655.1ZM1798.8,686.4L1754.7,655.1L1754.7,717.7ZM1798.8,749.0L1754.7,717.7L1754.7,780.3ZM1798.8,811.6L1754.7,780.3L1754.7,842.9ZM1843.0,216.9L1798.8,185.6L1798.8,248.2ZM1843.0,279.5L1798.8,248.2L1798.8,310.8ZM1843.0,342.1L1798.8,310.8L1798.8,373.4ZM1843.0,404.7L1798.8,373.4L1798.8,436.0ZM1843.0,467.3L1798.8,436.0L1798.8,498.6ZM1843.0,529.9L1798.8,498.6L1798.8,561.2ZM1843.0,592.5L1798.8,561.2L1798.8,623.8ZM1843.0,655.1L1798.8,623.8L1798.8,686.4ZM1843.0,717.7L1798.8,686.4L1798.8,749.0ZM1843.0,780.3L1798.8,749.0L1798.8,811.6ZM1843.0,842.9L1798.8,811.6L1798.8,874.2ZM1887.1,248.2L1843.0,216.9L1843.0,279.5ZM1887.1,310.8L1843.0,279.5L1843.0,342.1ZM1887.1,373.4L1843.0,342.1L1843.0,404.7ZM1887.1,436.0L1843.0,404.7L1843.0,467.3ZM1887.1,498.6L1843.0,467.3L1843.0,529.9ZM1887.1,561.2L1843.0,529.9L1843.0,592.5ZM1887.1,623.8L1843.0,592.5L1843.0,655.1ZM1887.1,686.4L1843.0,655.1L1843.0,717.7ZM1887.1,749.0L1843.0,717.7L1843.0,780.3ZM1887.1,811.6L1843.0,780.3L1843.0,842.9Z" fill="url(#hgt)"/>
<path d="M1286.3,-115.2L1747.5,211.9M1286.3,-52.6L1747.5,274.5M1286.3,10.0L1747.5,337.1M1286.3,72.6L1747.5,399.7M1286.3,135.2L1747.5,462.3M1286.3,197.8L1747.5,524.9M1286.3,260.4L1747.5,587.5M1286.3,323.0L1747.5,650.1M1286.3,385.6L1747.5,712.7M1286.3,448.2L1747.5,775.3M1286.3,510.8L1747.5,837.9M1286.3,573.4L1747.5,900.5M1286.3,636.0L1747.5,963.1M1286.3,698.6L1747.5,1025.7M1286.3,761.2L1747.5,1088.3M1286.3,823.8L1747.5,1150.9M1286.3,236.0L1747.5,-91.1M1286.3,298.6L1747.5,-28.5M1286.3,361.2L1747.5,34.1M1286.3,423.8L1747.5,96.7M1286.3,486.4L1747.5,159.3M1286.3,549.0L1747.5,221.9M1286.3,611.6L1747.5,284.5M1286.3,674.2L1747.5,347.1M1286.3,736.8L1747.5,409.7M1286.3,799.4L1747.5,472.3M1286.3,862.0L1747.5,534.9M1286.3,924.6L1747.5,597.5M1286.3,987.2L1747.5,660.1M1286.3,1049.8L1747.5,722.7M1286.3,1112.4L1747.5,785.3M1286.3,1175.0L1747.5,847.9" stroke="#e3e3e3" stroke-width="1.7" fill="none"/>
</g>
<polyline points="1753.9,404.5 1651.5,306.7 1281.9,497.6 1553.5,757.3 1749.7,655.9" fill="none" stroke="#8c8c8c" stroke-width="1"/>
<polyline points="1751.5,405.7 1651.1,309.7 1286.2,498.3 1553.9,754.3 1747.8,654.1" fill="none" stroke="#8c8c8c" stroke-width="1"/>
<polyline points="1743.5,401.4 1650.7,312.6 1290.3,498.8 1554.3,751.4 1738.9,656.0" fill="none" stroke="#8c8c8c" stroke-width="0.8"/>
<polygon points="1751.7,657.8 1856.0,757.6 1856.0,938.6 1751.7,838.8" fill="url(#hbl)" />
<polygon points="1856.0,757.6 2230.5,564.1 2230.5,745.1 1856.0,938.6" fill="url(#hbr)" />
<path d="M1856.0,760.6V938.6" stroke="#3353d8" stroke-width="1.2" stroke-dasharray="1,1"/>
<polygon points="1955.0,300.6 1580.5,494.1 1856.0,757.6 2230.5,564.1" fill="#2545cf" />
<g clip-path="url(#cb1)">
<path d="M1445.6,248.2L1489.8,216.9L1489.8,279.5ZM1445.6,310.8L1489.8,279.5L1489.8,342.1ZM1445.6,373.4L1489.8,342.1L1489.8,404.7ZM1445.6,436.0L1489.8,404.7L1489.8,467.3ZM1445.6,498.6L1489.8,467.3L1489.8,529.9ZM1445.6,561.2L1489.8,529.9L1489.8,592.5ZM1445.6,623.8L1489.8,592.5L1489.8,655.1ZM1445.6,686.4L1489.8,655.1L1489.8,717.7ZM1445.6,749.0L1489.8,717.7L1489.8,780.3ZM1445.6,811.6L1489.8,780.3L1489.8,842.9ZM1489.8,216.9L1533.9,185.6L1533.9,248.2ZM1489.8,279.5L1533.9,248.2L1533.9,310.8ZM1489.8,342.1L1533.9,310.8L1533.9,373.4ZM1489.8,404.7L1533.9,373.4L1533.9,436.0ZM1489.8,467.3L1533.9,436.0L1533.9,498.6ZM1489.8,529.9L1533.9,498.6L1533.9,561.2ZM1489.8,592.5L1533.9,561.2L1533.9,623.8ZM1489.8,655.1L1533.9,623.8L1533.9,686.4ZM1489.8,717.7L1533.9,686.4L1533.9,749.0ZM1489.8,780.3L1533.9,749.0L1533.9,811.6ZM1489.8,842.9L1533.9,811.6L1533.9,874.2ZM1533.9,248.2L1578.1,216.9L1578.1,279.5ZM1533.9,310.8L1578.1,279.5L1578.1,342.1ZM1533.9,373.4L1578.1,342.1L1578.1,404.7ZM1533.9,436.0L1578.1,404.7L1578.1,467.3ZM1533.9,498.6L1578.1,467.3L1578.1,529.9ZM1533.9,561.2L1578.1,529.9L1578.1,592.5ZM1533.9,623.8L1578.1,592.5L1578.1,655.1ZM1533.9,686.4L1578.1,655.1L1578.1,717.7ZM1533.9,749.0L1578.1,717.7L1578.1,780.3ZM1533.9,811.6L1578.1,780.3L1578.1,842.9ZM1578.0,216.9L1622.2,185.6L1622.2,248.2ZM1578.0,279.5L1622.2,248.2L1622.2,310.8ZM1578.0,342.1L1622.2,310.8L1622.2,373.4ZM1578.0,404.7L1622.2,373.4L1622.2,436.0ZM1578.0,467.3L1622.2,436.0L1622.2,498.6ZM1578.0,529.9L1622.2,498.6L1622.2,561.2ZM1578.0,592.5L1622.2,561.2L1622.2,623.8ZM1578.0,655.1L1622.2,623.8L1622.2,686.4ZM1578.0,717.7L1622.2,686.4L1622.2,749.0ZM1578.0,780.3L1622.2,749.0L1622.2,811.6ZM1578.0,842.9L1622.2,811.6L1622.2,874.2ZM1622.2,248.2L1666.4,216.9L1666.4,279.5ZM1622.2,310.8L1666.4,279.5L1666.4,342.1ZM1622.2,373.4L1666.4,342.1L1666.4,404.7ZM1622.2,436.0L1666.4,404.7L1666.4,467.3ZM1622.2,498.6L1666.4,467.3L1666.4,529.9ZM1622.2,561.2L1666.4,529.9L1666.4,592.5ZM1622.2,623.8L1666.4,592.5L1666.4,655.1ZM1622.2,686.4L1666.4,655.1L1666.4,717.7ZM1622.2,749.0L1666.4,717.7L1666.4,780.3ZM1622.2,811.6L1666.4,780.3L1666.4,842.9ZM1666.3,216.9L1710.5,185.6L1710.5,248.2ZM1666.3,279.5L1710.5,248.2L1710.5,310.8ZM1666.3,342.1L1710.5,310.8L1710.5,373.4ZM1666.3,404.7L1710.5,373.4L1710.5,436.0ZM1666.3,467.3L1710.5,436.0L1710.5,498.6ZM1666.3,529.9L1710.5,498.6L1710.5,561.2ZM1666.3,592.5L1710.5,561.2L1710.5,623.8ZM1666.3,655.1L1710.5,623.8L1710.5,686.4ZM1666.3,717.7L1710.5,686.4L1710.5,749.0ZM1666.3,780.3L1710.5,749.0L1710.5,811.6ZM1666.3,842.9L1710.5,811.6L1710.5,874.2ZM1710.5,248.2L1754.7,216.9L1754.7,279.5ZM1710.5,310.8L1754.7,279.5L1754.7,342.1ZM1710.5,373.4L1754.7,342.1L1754.7,404.7ZM1710.5,436.0L1754.7,404.7L1754.7,467.3ZM1710.5,498.6L1754.7,467.3L1754.7,529.9ZM1710.5,561.2L1754.7,529.9L1754.7,592.5ZM1710.5,623.8L1754.7,592.5L1754.7,655.1ZM1710.5,686.4L1754.7,655.1L1754.7,717.7ZM1710.5,749.0L1754.7,717.7L1754.7,780.3ZM1710.5,811.6L1754.7,780.3L1754.7,842.9ZM1754.7,216.9L1798.8,185.6L1798.8,248.2ZM1754.7,279.5L1798.8,248.2L1798.8,310.8ZM1754.7,342.1L1798.8,310.8L1798.8,373.4ZM1754.7,404.7L1798.8,373.4L1798.8,436.0ZM1754.7,467.3L1798.8,436.0L1798.8,498.6ZM1754.7,529.9L1798.8,498.6L1798.8,561.2ZM1754.7,592.5L1798.8,561.2L1798.8,623.8ZM1754.7,655.1L1798.8,623.8L1798.8,686.4ZM1754.7,717.7L1798.8,686.4L1798.8,749.0ZM1754.7,780.3L1798.8,749.0L1798.8,811.6ZM1754.7,842.9L1798.8,811.6L1798.8,874.2ZM1798.8,248.2L1843.0,216.9L1843.0,279.5ZM1798.8,310.8L1843.0,279.5L1843.0,342.1ZM1798.8,373.4L1843.0,342.1L1843.0,404.7ZM1798.8,436.0L1843.0,404.7L1843.0,467.3ZM1798.8,498.6L1843.0,467.3L1843.0,529.9ZM1798.8,561.2L1843.0,529.9L1843.0,592.5ZM1798.8,623.8L1843.0,592.5L1843.0,655.1ZM1798.8,686.4L1843.0,655.1L1843.0,717.7ZM1798.8,749.0L1843.0,717.7L1843.0,780.3ZM1798.8,811.6L1843.0,780.3L1843.0,842.9ZM1843.0,216.9L1887.1,185.6L1887.1,248.2ZM1843.0,279.5L1887.1,248.2L1887.1,310.8ZM1843.0,342.1L1887.1,310.8L1887.1,373.4ZM1843.0,404.7L1887.1,373.4L1887.1,436.0ZM1843.0,467.3L1887.1,436.0L1887.1,498.6ZM1843.0,529.9L1887.1,498.6L1887.1,561.2ZM1843.0,592.5L1887.1,561.2L1887.1,623.8ZM1843.0,655.1L1887.1,623.8L1887.1,686.4ZM1843.0,717.7L1887.1,686.4L1887.1,749.0ZM1843.0,780.3L1887.1,749.0L1887.1,811.6ZM1843.0,842.9L1887.1,811.6L1887.1,874.2ZM1887.1,248.2L1931.2,216.9L1931.2,279.5ZM1887.1,310.8L1931.2,279.5L1931.2,342.1ZM1887.1,373.4L1931.2,342.1L1931.2,404.7ZM1887.1,436.0L1931.2,404.7L1931.2,467.3ZM1887.1,498.6L1931.2,467.3L1931.2,529.9ZM1887.1,561.2L1931.2,529.9L1931.2,592.5ZM1887.1,623.8L1931.2,592.5L1931.2,655.1ZM1887.1,686.4L1931.2,655.1L1931.2,717.7ZM1887.1,749.0L1931.2,717.7L1931.2,780.3ZM1887.1,811.6L1931.2,780.3L1931.2,842.9ZM1931.2,216.9L1975.4,185.6L1975.4,248.2ZM1931.2,279.5L1975.4,248.2L1975.4,310.8ZM1931.2,342.1L1975.4,310.8L1975.4,373.4ZM1931.2,404.7L1975.4,373.4L1975.4,436.0ZM1931.2,467.3L1975.4,436.0L1975.4,498.6ZM1931.2,529.9L1975.4,498.6L1975.4,561.2ZM1931.2,592.5L1975.4,561.2L1975.4,623.8ZM1931.2,655.1L1975.4,623.8L1975.4,686.4ZM1931.2,717.7L1975.4,686.4L1975.4,749.0ZM1931.2,780.3L1975.4,749.0L1975.4,811.6ZM1931.2,842.9L1975.4,811.6L1975.4,874.2ZM1975.4,248.2L2019.6,216.9L2019.6,279.5ZM1975.4,310.8L2019.6,279.5L2019.6,342.1ZM1975.4,373.4L2019.6,342.1L2019.6,404.7ZM1975.4,436.0L2019.6,404.7L2019.6,467.3ZM1975.4,498.6L2019.6,467.3L2019.6,529.9ZM1975.4,561.2L2019.6,529.9L2019.6,592.5ZM1975.4,623.8L2019.6,592.5L2019.6,655.1ZM1975.4,686.4L2019.6,655.1L2019.6,717.7ZM1975.4,749.0L2019.6,717.7L2019.6,780.3ZM1975.4,811.6L2019.6,780.3L2019.6,842.9ZM2019.5,216.9L2063.7,185.6L2063.7,248.2ZM2019.5,279.5L2063.7,248.2L2063.7,310.8ZM2019.5,342.1L2063.7,310.8L2063.7,373.4ZM2019.5,404.7L2063.7,373.4L2063.7,436.0ZM2019.5,467.3L2063.7,436.0L2063.7,498.6ZM2019.5,529.9L2063.7,498.6L2063.7,561.2ZM2019.5,592.5L2063.7,561.2L2063.7,623.8ZM2019.5,655.1L2063.7,623.8L2063.7,686.4ZM2019.5,717.7L2063.7,686.4L2063.7,749.0ZM2019.5,780.3L2063.7,749.0L2063.7,811.6ZM2019.5,842.9L2063.7,811.6L2063.7,874.2ZM2063.7,248.2L2107.8,216.9L2107.8,279.5ZM2063.7,310.8L2107.8,279.5L2107.8,342.1ZM2063.7,373.4L2107.8,342.1L2107.8,404.7ZM2063.7,436.0L2107.8,404.7L2107.8,467.3ZM2063.7,498.6L2107.8,467.3L2107.8,529.9ZM2063.7,561.2L2107.8,529.9L2107.8,592.5ZM2063.7,623.8L2107.8,592.5L2107.8,655.1ZM2063.7,686.4L2107.8,655.1L2107.8,717.7ZM2063.7,749.0L2107.8,717.7L2107.8,780.3ZM2063.7,811.6L2107.8,780.3L2107.8,842.9ZM2107.8,216.9L2152.0,185.6L2152.0,248.2ZM2107.8,279.5L2152.0,248.2L2152.0,310.8ZM2107.8,342.1L2152.0,310.8L2152.0,373.4ZM2107.8,404.7L2152.0,373.4L2152.0,436.0ZM2107.8,467.3L2152.0,436.0L2152.0,498.6ZM2107.8,529.9L2152.0,498.6L2152.0,561.2ZM2107.8,592.5L2152.0,561.2L2152.0,623.8ZM2107.8,655.1L2152.0,623.8L2152.0,686.4ZM2107.8,717.7L2152.0,686.4L2152.0,749.0ZM2107.8,780.3L2152.0,749.0L2152.0,811.6ZM2107.8,842.9L2152.0,811.6L2152.0,874.2ZM2152.0,248.2L2196.2,216.9L2196.2,279.5ZM2152.0,310.8L2196.2,279.5L2196.2,342.1ZM2152.0,373.4L2196.2,342.1L2196.2,404.7ZM2152.0,436.0L2196.2,404.7L2196.2,467.3ZM2152.0,498.6L2196.2,467.3L2196.2,529.9ZM2152.0,561.2L2196.2,529.9L2196.2,592.5ZM2152.0,623.8L2196.2,592.5L2196.2,655.1ZM2152.0,686.4L2196.2,655.1L2196.2,717.7ZM2152.0,749.0L2196.2,717.7L2196.2,780.3ZM2152.0,811.6L2196.2,780.3L2196.2,842.9ZM2196.2,216.9L2240.3,185.6L2240.3,248.2ZM2196.2,279.5L2240.3,248.2L2240.3,310.8ZM2196.2,342.1L2240.3,310.8L2240.3,373.4ZM2196.2,404.7L2240.3,373.4L2240.3,436.0ZM2196.2,467.3L2240.3,436.0L2240.3,498.6ZM2196.2,529.9L2240.3,498.6L2240.3,561.2ZM2196.2,592.5L2240.3,561.2L2240.3,623.8ZM2196.2,655.1L2240.3,623.8L2240.3,686.4ZM2196.2,717.7L2240.3,686.4L2240.3,749.0ZM2196.2,780.3L2240.3,749.0L2240.3,811.6ZM2196.2,842.9L2240.3,811.6L2240.3,874.2ZM2240.3,248.2L2284.4,216.9L2284.4,279.5ZM2240.3,310.8L2284.4,279.5L2284.4,342.1ZM2240.3,373.4L2284.4,342.1L2284.4,404.7ZM2240.3,436.0L2284.4,404.7L2284.4,467.3ZM2240.3,498.6L2284.4,467.3L2284.4,529.9ZM2240.3,561.2L2284.4,529.9L2284.4,592.5ZM2240.3,623.8L2284.4,592.5L2284.4,655.1ZM2240.3,686.4L2284.4,655.1L2284.4,717.7ZM2240.3,749.0L2284.4,717.7L2284.4,780.3ZM2240.3,811.6L2284.4,780.3L2284.4,842.9ZM2284.4,216.9L2328.6,185.6L2328.6,248.2ZM2284.4,279.5L2328.6,248.2L2328.6,310.8ZM2284.4,342.1L2328.6,310.8L2328.6,373.4ZM2284.4,404.7L2328.6,373.4L2328.6,436.0ZM2284.4,467.3L2328.6,436.0L2328.6,498.6ZM2284.4,529.9L2328.6,498.6L2328.6,561.2ZM2284.4,592.5L2328.6,561.2L2328.6,623.8ZM2284.4,655.1L2328.6,623.8L2328.6,686.4ZM2284.4,717.7L2328.6,686.4L2328.6,749.0ZM2284.4,780.3L2328.6,749.0L2328.6,811.6ZM2284.4,842.9L2328.6,811.6L2328.6,874.2Z" fill="url(#hbd)"/>
<path d="M1533.9,248.2L1489.8,216.9L1489.8,279.5ZM1533.9,310.8L1489.8,279.5L1489.8,342.1ZM1533.9,373.4L1489.8,342.1L1489.8,404.7ZM1533.9,436.0L1489.8,404.7L1489.8,467.3ZM1533.9,498.6L1489.8,467.3L1489.8,529.9ZM1533.9,561.2L1489.8,529.9L1489.8,592.5ZM1533.9,623.8L1489.8,592.5L1489.8,655.1ZM1533.9,686.4L1489.8,655.1L1489.8,717.7ZM1533.9,749.0L1489.8,717.7L1489.8,780.3ZM1533.9,811.6L1489.8,780.3L1489.8,842.9ZM1578.1,216.9L1533.9,185.6L1533.9,248.2ZM1578.1,279.5L1533.9,248.2L1533.9,310.8ZM1578.1,342.1L1533.9,310.8L1533.9,373.4ZM1578.1,404.7L1533.9,373.4L1533.9,436.0ZM1578.1,467.3L1533.9,436.0L1533.9,498.6ZM1578.1,529.9L1533.9,498.6L1533.9,561.2ZM1578.1,592.5L1533.9,561.2L1533.9,623.8ZM1578.1,655.1L1533.9,623.8L1533.9,686.4ZM1578.1,717.7L1533.9,686.4L1533.9,749.0ZM1578.1,780.3L1533.9,749.0L1533.9,811.6ZM1578.1,842.9L1533.9,811.6L1533.9,874.2ZM1622.2,248.2L1578.1,216.9L1578.1,279.5ZM1622.2,310.8L1578.1,279.5L1578.1,342.1ZM1622.2,373.4L1578.1,342.1L1578.1,404.7ZM1622.2,436.0L1578.1,404.7L1578.1,467.3ZM1622.2,498.6L1578.1,467.3L1578.1,529.9ZM1622.2,561.2L1578.1,529.9L1578.1,592.5ZM1622.2,623.8L1578.1,592.5L1578.1,655.1ZM1622.2,686.4L1578.1,655.1L1578.1,717.7ZM1622.2,749.0L1578.1,717.7L1578.1,780.3ZM1622.2,811.6L1578.1,780.3L1578.1,842.9ZM1666.4,216.9L1622.2,185.6L1622.2,248.2ZM1666.4,279.5L1622.2,248.2L1622.2,310.8ZM1666.4,342.1L1622.2,310.8L1622.2,373.4ZM1666.4,404.7L1622.2,373.4L1622.2,436.0ZM1666.4,467.3L1622.2,436.0L1622.2,498.6ZM1666.4,529.9L1622.2,498.6L1622.2,561.2ZM1666.4,592.5L1622.2,561.2L1622.2,623.8ZM1666.4,655.1L1622.2,623.8L1622.2,686.4ZM1666.4,717.7L1622.2,686.4L1622.2,749.0ZM1666.4,780.3L1622.2,749.0L1622.2,811.6ZM1666.4,842.9L1622.2,811.6L1622.2,874.2ZM1710.5,248.2L1666.4,216.9L1666.4,279.5ZM1710.5,310.8L1666.4,279.5L1666.4,342.1ZM1710.5,373.4L1666.4,342.1L1666.4,404.7ZM1710.5,436.0L1666.4,404.7L1666.4,467.3ZM1710.5,498.6L1666.4,467.3L1666.4,529.9ZM1710.5,561.2L1666.4,529.9L1666.4,592.5ZM1710.5,623.8L1666.4,592.5L1666.4,655.1ZM1710.5,686.4L1666.4,655.1L1666.4,717.7ZM1710.5,749.0L1666.4,717.7L1666.4,780.3ZM1710.5,811.6L1666.4,780.3L1666.4,842.9ZM1754.7,216.9L1710.5,185.6L1710.5,248.2ZM1754.7,279.5L1710.5,248.2L1710.5,310.8ZM1754.7,342.1L1710.5,310.8L1710.5,373.4ZM1754.7,404.7L1710.5,373.4L1710.5,436.0ZM1754.7,467.3L1710.5,436.0L1710.5,498.6ZM1754.7,529.9L1710.5,498.6L1710.5,561.2ZM1754.7,592.5L1710.5,561.2L1710.5,623.8ZM1754.7,655.1L1710.5,623.8L1710.5,686.4ZM1754.7,717.7L1710.5,686.4L1710.5,749.0ZM1754.7,780.3L1710.5,749.0L1710.5,811.6ZM1754.7,842.9L1710.5,811.6L1710.5,874.2ZM1798.8,248.2L1754.7,216.9L1754.7,279.5ZM1798.8,310.8L1754.7,279.5L1754.7,342.1ZM1798.8,373.4L1754.7,342.1L1754.7,404.7ZM1798.8,436.0L1754.7,404.7L1754.7,467.3ZM1798.8,498.6L1754.7,467.3L1754.7,529.9ZM1798.8,561.2L1754.7,529.9L1754.7,592.5ZM1798.8,623.8L1754.7,592.5L1754.7,655.1ZM1798.8,686.4L1754.7,655.1L1754.7,717.7ZM1798.8,749.0L1754.7,717.7L1754.7,780.3ZM1798.8,811.6L1754.7,780.3L1754.7,842.9ZM1843.0,216.9L1798.8,185.6L1798.8,248.2ZM1843.0,279.5L1798.8,248.2L1798.8,310.8ZM1843.0,342.1L1798.8,310.8L1798.8,373.4ZM1843.0,404.7L1798.8,373.4L1798.8,436.0ZM1843.0,467.3L1798.8,436.0L1798.8,498.6ZM1843.0,529.9L1798.8,498.6L1798.8,561.2ZM1843.0,592.5L1798.8,561.2L1798.8,623.8ZM1843.0,655.1L1798.8,623.8L1798.8,686.4ZM1843.0,717.7L1798.8,686.4L1798.8,749.0ZM1843.0,780.3L1798.8,749.0L1798.8,811.6ZM1843.0,842.9L1798.8,811.6L1798.8,874.2ZM1887.1,248.2L1843.0,216.9L1843.0,279.5ZM1887.1,310.8L1843.0,279.5L1843.0,342.1ZM1887.1,373.4L1843.0,342.1L1843.0,404.7ZM1887.1,436.0L1843.0,404.7L1843.0,467.3ZM1887.1,498.6L1843.0,467.3L1843.0,529.9ZM1887.1,561.2L1843.0,529.9L1843.0,592.5ZM1887.1,623.8L1843.0,592.5L1843.0,655.1ZM1887.1,686.4L1843.0,655.1L1843.0,717.7ZM1887.1,749.0L1843.0,717.7L1843.0,780.3ZM1887.1,811.6L1843.0,780.3L1843.0,842.9ZM1931.3,216.9L1887.1,185.6L1887.1,248.2ZM1931.3,279.5L1887.1,248.2L1887.1,310.8ZM1931.3,342.1L1887.1,310.8L1887.1,373.4ZM1931.3,404.7L1887.1,373.4L1887.1,436.0ZM1931.3,467.3L1887.1,436.0L1887.1,498.6ZM1931.3,529.9L1887.1,498.6L1887.1,561.2ZM1931.3,592.5L1887.1,561.2L1887.1,623.8ZM1931.3,655.1L1887.1,623.8L1887.1,686.4ZM1931.3,717.7L1887.1,686.4L1887.1,749.0ZM1931.3,780.3L1887.1,749.0L1887.1,811.6ZM1931.3,842.9L1887.1,811.6L1887.1,874.2ZM1975.4,248.2L1931.2,216.9L1931.2,279.5ZM1975.4,310.8L1931.2,279.5L1931.2,342.1ZM1975.4,373.4L1931.2,342.1L1931.2,404.7ZM1975.4,436.0L1931.2,404.7L1931.2,467.3ZM1975.4,498.6L1931.2,467.3L1931.2,529.9ZM1975.4,561.2L1931.2,529.9L1931.2,592.5ZM1975.4,623.8L1931.2,592.5L1931.2,655.1ZM1975.4,686.4L1931.2,655.1L1931.2,717.7ZM1975.4,749.0L1931.2,717.7L1931.2,780.3ZM1975.4,811.6L1931.2,780.3L1931.2,842.9ZM2019.6,216.9L1975.4,185.6L1975.4,248.2ZM2019.6,279.5L1975.4,248.2L1975.4,310.8ZM2019.6,342.1L1975.4,310.8L1975.4,373.4ZM2019.6,404.7L1975.4,373.4L1975.4,436.0ZM2019.6,467.3L1975.4,436.0L1975.4,498.6ZM2019.6,529.9L1975.4,498.6L1975.4,561.2ZM2019.6,592.5L1975.4,561.2L1975.4,623.8ZM2019.6,655.1L1975.4,623.8L1975.4,686.4ZM2019.6,717.7L1975.4,686.4L1975.4,749.0ZM2019.6,780.3L1975.4,749.0L1975.4,811.6ZM2019.6,842.9L1975.4,811.6L1975.4,874.2ZM2063.7,248.2L2019.6,216.9L2019.6,279.5ZM2063.7,310.8L2019.6,279.5L2019.6,342.1ZM2063.7,373.4L2019.6,342.1L2019.6,404.7ZM2063.7,436.0L2019.6,404.7L2019.6,467.3ZM2063.7,498.6L2019.6,467.3L2019.6,529.9ZM2063.7,561.2L2019.6,529.9L2019.6,592.5ZM2063.7,623.8L2019.6,592.5L2019.6,655.1ZM2063.7,686.4L2019.6,655.1L2019.6,717.7ZM2063.7,749.0L2019.6,717.7L2019.6,780.3ZM2063.7,811.6L2019.6,780.3L2019.6,842.9ZM2107.8,216.9L2063.7,185.6L2063.7,248.2ZM2107.8,279.5L2063.7,248.2L2063.7,310.8ZM2107.8,342.1L2063.7,310.8L2063.7,373.4ZM2107.8,404.7L2063.7,373.4L2063.7,436.0ZM2107.8,467.3L2063.7,436.0L2063.7,498.6ZM2107.8,529.9L2063.7,498.6L2063.7,561.2ZM2107.8,592.5L2063.7,561.2L2063.7,623.8ZM2107.8,655.1L2063.7,623.8L2063.7,686.4ZM2107.8,717.7L2063.7,686.4L2063.7,749.0ZM2107.8,780.3L2063.7,749.0L2063.7,811.6ZM2107.8,842.9L2063.7,811.6L2063.7,874.2ZM2152.0,248.2L2107.8,216.9L2107.8,279.5ZM2152.0,310.8L2107.8,279.5L2107.8,342.1ZM2152.0,373.4L2107.8,342.1L2107.8,404.7ZM2152.0,436.0L2107.8,404.7L2107.8,467.3ZM2152.0,498.6L2107.8,467.3L2107.8,529.9ZM2152.0,561.2L2107.8,529.9L2107.8,592.5ZM2152.0,623.8L2107.8,592.5L2107.8,655.1ZM2152.0,686.4L2107.8,655.1L2107.8,717.7ZM2152.0,749.0L2107.8,717.7L2107.8,780.3ZM2152.0,811.6L2107.8,780.3L2107.8,842.9ZM2196.2,216.9L2152.0,185.6L2152.0,248.2ZM2196.2,279.5L2152.0,248.2L2152.0,310.8ZM2196.2,342.1L2152.0,310.8L2152.0,373.4ZM2196.2,404.7L2152.0,373.4L2152.0,436.0ZM2196.2,467.3L2152.0,436.0L2152.0,498.6ZM2196.2,529.9L2152.0,498.6L2152.0,561.2ZM2196.2,592.5L2152.0,561.2L2152.0,623.8ZM2196.2,655.1L2152.0,623.8L2152.0,686.4ZM2196.2,717.7L2152.0,686.4L2152.0,749.0ZM2196.2,780.3L2152.0,749.0L2152.0,811.6ZM2196.2,842.9L2152.0,811.6L2152.0,874.2ZM2240.3,248.2L2196.2,216.9L2196.2,279.5ZM2240.3,310.8L2196.2,279.5L2196.2,342.1ZM2240.3,373.4L2196.2,342.1L2196.2,404.7ZM2240.3,436.0L2196.2,404.7L2196.2,467.3ZM2240.3,498.6L2196.2,467.3L2196.2,529.9ZM2240.3,561.2L2196.2,529.9L2196.2,592.5ZM2240.3,623.8L2196.2,592.5L2196.2,655.1ZM2240.3,686.4L2196.2,655.1L2196.2,717.7ZM2240.3,749.0L2196.2,717.7L2196.2,780.3ZM2240.3,811.6L2196.2,780.3L2196.2,842.9ZM2284.5,216.9L2240.3,185.6L2240.3,248.2ZM2284.5,279.5L2240.3,248.2L2240.3,310.8ZM2284.5,342.1L2240.3,310.8L2240.3,373.4ZM2284.5,404.7L2240.3,373.4L2240.3,436.0ZM2284.5,467.3L2240.3,436.0L2240.3,498.6ZM2284.5,529.9L2240.3,498.6L2240.3,561.2ZM2284.5,592.5L2240.3,561.2L2240.3,623.8ZM2284.5,655.1L2240.3,623.8L2240.3,686.4ZM2284.5,717.7L2240.3,686.4L2240.3,749.0ZM2284.5,780.3L2240.3,749.0L2240.3,811.6ZM2284.5,842.9L2240.3,811.6L2240.3,874.2ZM2328.6,248.2L2284.4,216.9L2284.4,279.5ZM2328.6,310.8L2284.4,279.5L2284.4,342.1ZM2328.6,373.4L2284.4,342.1L2284.4,404.7ZM2328.6,436.0L2284.4,404.7L2284.4,467.3ZM2328.6,498.6L2284.4,467.3L2284.4,529.9ZM2328.6,561.2L2284.4,529.9L2284.4,592.5ZM2328.6,623.8L2284.4,592.5L2284.4,655.1ZM2328.6,686.4L2284.4,655.1L2284.4,717.7ZM2328.6,749.0L2284.4,717.7L2284.4,780.3ZM2328.6,811.6L2284.4,780.3L2284.4,842.9ZM2372.8,216.9L2328.6,185.6L2328.6,248.2ZM2372.8,279.5L2328.6,248.2L2328.6,310.8ZM2372.8,342.1L2328.6,310.8L2328.6,373.4ZM2372.8,404.7L2328.6,373.4L2328.6,436.0ZM2372.8,467.3L2328.6,436.0L2328.6,498.6ZM2372.8,529.9L2328.6,498.6L2328.6,561.2ZM2372.8,592.5L2328.6,561.2L2328.6,623.8ZM2372.8,655.1L2328.6,623.8L2328.6,686.4ZM2372.8,717.7L2328.6,686.4L2328.6,749.0ZM2372.8,780.3L2328.6,749.0L2328.6,811.6ZM2372.8,842.9L2328.6,811.6L2328.6,874.2Z" fill="url(#hbt)"/>
<path d="M1590.1,-212.7L2220.9,234.4M1590.1,-150.1L2220.9,297.0M1590.1,-87.5L2220.9,359.6M1590.1,-24.9L2220.9,422.2M1590.1,37.7L2220.9,484.8M1590.1,100.3L2220.9,547.4M1590.1,162.9L2220.9,610.0M1590.1,225.5L2220.9,672.6M1590.1,288.1L2220.9,735.2M1590.1,350.7L2220.9,797.8M1590.1,413.3L2220.9,860.4M1590.1,475.9L2220.9,923.0M1590.1,538.5L2220.9,985.6M1590.1,601.1L2220.9,1048.2M1590.1,663.7L2220.9,1110.8M1590.1,726.3L2220.9,1173.4M1590.1,788.9L2220.9,1236.0M1590.1,851.5L2220.9,1298.6M1590.1,208.3L2220.9,-238.8M1590.1,270.9L2220.9,-176.2M1590.1,333.5L2220.9,-113.6M1590.1,396.1L2220.9,-51.0M1590.1,458.7L2220.9,11.6M1590.1,521.3L2220.9,74.2M1590.1,583.9L2220.9,136.8M1590.1,646.5L2220.9,199.4M1590.1,709.1L2220.9,262.0M1590.1,771.7L2220.9,324.6M1590.1,834.3L2220.9,387.2M1590.1,896.9L2220.9,449.8M1590.1,959.5L2220.9,512.4M1590.1,1022.1L2220.9,575.0M1590.1,1084.7L2220.9,637.6M1590.1,1147.3L2220.9,700.2M1590.1,1209.9L2220.9,762.8M1590.1,1272.5L2220.9,825.4" stroke="#2c4edb" stroke-width="1.7" fill="none"/>
</g>
<polygon points="1954.5,303.9 1585.1,494.8 1856.5,754.3 2225.9,563.4" fill="none" stroke="#17298a" stroke-width="1"/>
<polygon points="1954.1,307.2 1589.7,495.4 1856.9,751.0 2221.3,562.8" fill="none" stroke="#17298a" stroke-width="1"/>
<polygon points="1724.2,380.4 1553.5,468.7 1553.5,504.3 1726.5,669.7 1730.5,658.3 1561.5,496.7 1561.5,476.9 1724.9,392.5" fill="rgba(208,208,208,0.6)" />
<polygon points="1724.9,392.5 1561.5,476.9 1561.5,496.7 1730.5,658.3 1733.8,650.5 1568.5,492.3 1568.5,482.3 1725.9,401.0" fill="#d8d8d8" />
<polyline points="1725.4,396.7 1565.0,479.6 1565.0,494.5 1732.2,654.4" fill="none" stroke="#8a8a8a" stroke-width="0.9"/>
<polygon points="1725.9,401.0 1568.5,482.3 1568.5,494.1 1580.5,494.1 1609.5,498.3 1741.0,430.3" fill="#d2d2d2" />
<g clip-path="url(#ci1)">
<path d="M1533.6,397.0L1542.6,397.0L1487.2,502.3L1478.2,502.3ZM1550.1,397.0L1559.1,397.0L1503.7,502.3L1494.7,502.3ZM1566.6,397.0L1575.6,397.0L1520.2,502.3L1511.2,502.3ZM1583.1,397.0L1592.1,397.0L1536.7,502.3L1527.7,502.3ZM1599.6,397.0L1608.6,397.0L1553.2,502.3L1544.2,502.3ZM1616.1,397.0L1625.1,397.0L1569.7,502.3L1560.7,502.3ZM1632.6,397.0L1641.6,397.0L1586.2,502.3L1577.2,502.3ZM1649.1,397.0L1658.1,397.0L1602.7,502.3L1593.7,502.3ZM1665.6,397.0L1674.6,397.0L1619.2,502.3L1610.2,502.3ZM1682.1,397.0L1691.1,397.0L1635.7,502.3L1626.7,502.3ZM1698.6,397.0L1707.6,397.0L1652.2,502.3L1643.2,502.3ZM1715.1,397.0L1724.1,397.0L1668.7,502.3L1659.7,502.3ZM1731.6,397.0L1740.6,397.0L1685.2,502.3L1676.2,502.3ZM1748.1,397.0L1757.1,397.0L1701.7,502.3L1692.7,502.3ZM1764.6,397.0L1773.6,397.0L1718.2,502.3L1709.2,502.3ZM1781.1,397.0L1790.1,397.0L1734.7,502.3L1725.7,502.3ZM1797.6,397.0L1806.6,397.0L1751.2,502.3L1742.2,502.3ZM1814.1,397.0L1823.1,397.0L1767.7,502.3L1758.7,502.3ZM1830.6,397.0L1839.6,397.0L1784.2,502.3L1775.2,502.3Z" fill="#1f3cc0"/>
<path d="M1542.6,397.0L1545.6,397.0L1490.2,502.3L1487.2,502.3ZM1547.1,397.0L1550.1,397.0L1494.7,502.3L1491.7,502.3ZM1559.1,397.0L1562.1,397.0L1506.7,502.3L1503.7,502.3ZM1563.6,397.0L1566.6,397.0L1511.2,502.3L1508.2,502.3ZM1575.6,397.0L1578.6,397.0L1523.2,502.3L1520.2,502.3ZM1580.1,397.0L1583.1,397.0L1527.7,502.3L1524.7,502.3ZM1592.1,397.0L1595.1,397.0L1539.7,502.3L1536.7,502.3ZM1596.6,397.0L1599.6,397.0L1544.2,502.3L1541.2,502.3ZM1608.6,397.0L1611.6,397.0L1556.2,502.3L1553.2,502.3ZM1613.1,397.0L1616.1,397.0L1560.7,502.3L1557.7,502.3ZM1625.1,397.0L1628.1,397.0L1572.7,502.3L1569.7,502.3ZM1629.6,397.0L1632.6,397.0L1577.2,502.3L1574.2,502.3ZM1641.6,397.0L1644.6,397.0L1589.2,502.3L1586.2,502.3ZM1646.1,397.0L1649.1,397.0L1593.7,502.3L1590.7,502.3ZM1658.1,397.0L1661.1,397.0L1605.7,502.3L1602.7,502.3ZM1662.6,397.0L1665.6,397.0L1610.2,502.3L1607.2,502.3ZM1674.6,397.0L1677.6,397.0L1622.2,502.3L1619.2,502.3ZM1679.1,397.0L1682.1,397.0L1626.7,502.3L1623.7,502.3ZM1691.1,397.0L1694.1,397.0L1638.7,502.3L1635.7,502.3ZM1695.6,397.0L1698.6,397.0L1643.2,502.3L1640.2,502.3ZM1707.6,397.0L1710.6,397.0L1655.2,502.3L1652.2,502.3ZM1712.1,397.0L1715.1,397.0L1659.7,502.3L1656.7,502.3ZM1724.1,397.0L1727.1,397.0L1671.7,502.3L1668.7,502.3ZM1728.6,397.0L1731.6,397.0L1676.2,502.3L1673.2,502.3ZM1740.6,397.0L1743.6,397.0L1688.2,502.3L1685.2,502.3ZM1745.1,397.0L1748.1,397.0L1692.7,502.3L1689.7,502.3ZM1757.1,397.0L1760.1,397.0L1704.7,502.3L1701.7,502.3ZM1761.6,397.0L1764.6,397.0L1709.2,502.3L1706.2,502.3ZM1773.6,397.0L1776.6,397.0L1721.2,502.3L1718.2,502.3ZM1778.1,397.0L1781.1,397.0L1725.7,502.3L1722.7,502.3ZM1790.1,397.0L1793.1,397.0L1737.7,502.3L1734.7,502.3ZM1794.6,397.0L1797.6,397.0L1742.2,502.3L1739.2,502.3ZM1806.6,397.0L1809.6,397.0L1754.2,502.3L1751.2,502.3ZM1811.1,397.0L1814.1,397.0L1758.7,502.3L1755.7,502.3ZM1823.1,397.0L1826.1,397.0L1770.7,502.3L1767.7,502.3ZM1827.6,397.0L1830.6,397.0L1775.2,502.3L1772.2,502.3ZM1839.6,397.0L1842.6,397.0L1787.2,502.3L1784.2,502.3ZM1844.1,397.0L1847.1,397.0L1791.7,502.3L1788.7,502.3Z" fill="#dedede"/>
<path d="M1545.6,397.0L1547.1,397.0L1491.7,502.3L1490.2,502.3ZM1562.1,397.0L1563.6,397.0L1508.2,502.3L1506.7,502.3ZM1578.6,397.0L1580.1,397.0L1524.7,502.3L1523.2,502.3ZM1595.1,397.0L1596.6,397.0L1541.2,502.3L1539.7,502.3ZM1611.6,397.0L1613.1,397.0L1557.7,502.3L1556.2,502.3ZM1628.1,397.0L1629.6,397.0L1574.2,502.3L1572.7,502.3ZM1644.6,397.0L1646.1,397.0L1590.7,502.3L1589.2,502.3ZM1661.1,397.0L1662.6,397.0L1607.2,502.3L1605.7,502.3ZM1677.6,397.0L1679.1,397.0L1623.7,502.3L1622.2,502.3ZM1694.1,397.0L1695.6,397.0L1640.2,502.3L1638.7,502.3ZM1710.6,397.0L1712.1,397.0L1656.7,502.3L1655.2,502.3ZM1727.1,397.0L1728.6,397.0L1673.2,502.3L1671.7,502.3ZM1743.6,397.0L1745.1,397.0L1689.7,502.3L1688.2,502.3ZM1760.1,397.0L1761.6,397.0L1706.2,502.3L1704.7,502.3ZM1776.6,397.0L1778.1,397.0L1722.7,502.3L1721.2,502.3ZM1793.1,397.0L1794.6,397.0L1739.2,502.3L1737.7,502.3ZM1809.6,397.0L1811.1,397.0L1755.7,502.3L1754.2,502.3ZM1826.1,397.0L1827.6,397.0L1772.2,502.3L1770.7,502.3ZM1842.6,397.0L1844.1,397.0L1788.7,502.3L1787.2,502.3Z" fill="#808080"/>
</g>
<polygon points="1568.5,494.1 1568.5,492.3 1733.8,650.5 1750.4,633.1 1609.5,498.3 1580.5,494.1" fill="#d2d2d2" />
<g clip-path="url(#cj1)">
<path d="M1535.0,488.3L1545.6,488.3L1458.2,654.5L1447.6,654.5ZM1551.5,488.3L1562.1,488.3L1474.7,654.5L1464.1,654.5ZM1568.0,488.3L1578.6,488.3L1491.2,654.5L1480.6,654.5ZM1584.5,488.3L1595.1,488.3L1507.7,654.5L1497.1,654.5ZM1601.0,488.3L1611.6,488.3L1524.2,654.5L1513.6,654.5ZM1617.5,488.3L1628.1,488.3L1540.7,654.5L1530.1,654.5ZM1634.0,488.3L1644.6,488.3L1557.2,654.5L1546.6,654.5ZM1650.5,488.3L1661.1,488.3L1573.7,654.5L1563.1,654.5ZM1667.0,488.3L1677.6,488.3L1590.2,654.5L1579.6,654.5ZM1683.5,488.3L1694.1,488.3L1606.7,654.5L1596.1,654.5ZM1700.0,488.3L1710.6,488.3L1623.2,654.5L1612.6,654.5ZM1716.5,488.3L1727.1,488.3L1639.7,654.5L1629.1,654.5ZM1733.0,488.3L1743.6,488.3L1656.2,654.5L1645.6,654.5ZM1749.5,488.3L1760.1,488.3L1672.7,654.5L1662.1,654.5ZM1766.0,488.3L1776.6,488.3L1689.2,654.5L1678.6,654.5ZM1782.5,488.3L1793.1,488.3L1705.7,654.5L1695.1,654.5ZM1799.0,488.3L1809.6,488.3L1722.2,654.5L1711.6,654.5ZM1815.5,488.3L1826.1,488.3L1738.7,654.5L1728.1,654.5ZM1832.0,488.3L1842.6,488.3L1755.2,654.5L1744.6,654.5ZM1848.5,488.3L1859.1,488.3L1771.7,654.5L1761.1,654.5ZM1865.0,488.3L1875.6,488.3L1788.2,654.5L1777.6,654.5Z" fill="#1f3cc0"/>
<path d="M1545.6,488.3L1547.8,488.3L1460.4,654.5L1458.2,654.5ZM1549.3,488.3L1551.5,488.3L1464.1,654.5L1461.9,654.5ZM1562.1,488.3L1564.3,488.3L1476.9,654.5L1474.7,654.5ZM1565.8,488.3L1568.0,488.3L1480.6,654.5L1478.4,654.5ZM1578.6,488.3L1580.8,488.3L1493.4,654.5L1491.2,654.5ZM1582.3,488.3L1584.5,488.3L1497.1,654.5L1494.9,654.5ZM1595.1,488.3L1597.3,488.3L1509.9,654.5L1507.7,654.5ZM1598.8,488.3L1601.0,488.3L1513.6,654.5L1511.4,654.5ZM1611.6,488.3L1613.8,488.3L1526.4,654.5L1524.2,654.5ZM1615.3,488.3L1617.5,488.3L1530.1,654.5L1527.9,654.5ZM1628.1,488.3L1630.3,488.3L1542.9,654.5L1540.7,654.5ZM1631.8,488.3L1634.0,488.3L1546.6,654.5L1544.4,654.5ZM1644.6,488.3L1646.8,488.3L1559.4,654.5L1557.2,654.5ZM1648.3,488.3L1650.5,488.3L1563.1,654.5L1560.9,654.5ZM1661.1,488.3L1663.3,488.3L1575.9,654.5L1573.7,654.5ZM1664.8,488.3L1667.0,488.3L1579.6,654.5L1577.4,654.5ZM1677.6,488.3L1679.8,488.3L1592.4,654.5L1590.2,654.5ZM1681.3,488.3L1683.5,488.3L1596.1,654.5L1593.9,654.5ZM1694.1,488.3L1696.3,488.3L1608.9,654.5L1606.7,654.5ZM1697.8,488.3L1700.0,488.3L1612.6,654.5L1610.4,654.5ZM1710.6,488.3L1712.8,488.3L1625.4,654.5L1623.2,654.5ZM1714.3,488.3L1716.5,488.3L1629.1,654.5L1626.9,654.5ZM1727.1,488.3L1729.3,488.3L1641.9,654.5L1639.7,654.5ZM1730.8,488.3L1733.0,488.3L1645.6,654.5L1643.4,654.5ZM1743.6,488.3L1745.8,488.3L1658.4,654.5L1656.2,654.5ZM1747.3,488.3L1749.5,488.3L1662.1,654.5L1659.9,654.5ZM1760.1,488.3L1762.3,488.3L1674.9,654.5L1672.7,654.5ZM1763.8,488.3L1766.0,488.3L1678.6,654.5L1676.4,654.5ZM1776.6,488.3L1778.8,488.3L1691.4,654.5L1689.2,654.5ZM1780.3,488.3L1782.5,488.3L1695.1,654.5L1692.9,654.5ZM1793.1,488.3L1795.3,488.3L1707.9,654.5L1705.7,654.5ZM1796.8,488.3L1799.0,488.3L1711.6,654.5L1709.4,654.5ZM1809.6,488.3L1811.8,488.3L1724.4,654.5L1722.2,654.5ZM1813.3,488.3L1815.5,488.3L1728.1,654.5L1725.9,654.5ZM1826.1,488.3L1828.3,488.3L1740.9,654.5L1738.7,654.5ZM1829.8,488.3L1832.0,488.3L1744.6,654.5L1742.4,654.5ZM1842.6,488.3L1844.8,488.3L1757.4,654.5L1755.2,654.5ZM1846.3,488.3L1848.5,488.3L1761.1,654.5L1758.9,654.5ZM1859.1,488.3L1861.3,488.3L1773.9,654.5L1771.7,654.5ZM1862.8,488.3L1865.0,488.3L1777.6,654.5L1775.4,654.5ZM1875.6,488.3L1877.8,488.3L1790.4,654.5L1788.2,654.5ZM1879.3,488.3L1881.5,488.3L1794.1,654.5L1791.9,654.5Z" fill="#dedede"/>
<path d="M1547.8,488.3L1549.3,488.3L1461.9,654.5L1460.4,654.5ZM1564.3,488.3L1565.8,488.3L1478.4,654.5L1476.9,654.5ZM1580.8,488.3L1582.3,488.3L1494.9,654.5L1493.4,654.5ZM1597.3,488.3L1598.8,488.3L1511.4,654.5L1509.9,654.5ZM1613.8,488.3L1615.3,488.3L1527.9,654.5L1526.4,654.5ZM1630.3,488.3L1631.8,488.3L1544.4,654.5L1542.9,654.5ZM1646.8,488.3L1648.3,488.3L1560.9,654.5L1559.4,654.5ZM1663.3,488.3L1664.8,488.3L1577.4,654.5L1575.9,654.5ZM1679.8,488.3L1681.3,488.3L1593.9,654.5L1592.4,654.5ZM1696.3,488.3L1697.8,488.3L1610.4,654.5L1608.9,654.5ZM1712.8,488.3L1714.3,488.3L1626.9,654.5L1625.4,654.5ZM1729.3,488.3L1730.8,488.3L1643.4,654.5L1641.9,654.5ZM1745.8,488.3L1747.3,488.3L1659.9,654.5L1658.4,654.5ZM1762.3,488.3L1763.8,488.3L1676.4,654.5L1674.9,654.5ZM1778.8,488.3L1780.3,488.3L1692.9,654.5L1691.4,654.5ZM1795.3,488.3L1796.8,488.3L1709.4,654.5L1707.9,654.5ZM1811.8,488.3L1813.3,488.3L1725.9,654.5L1724.4,654.5ZM1828.3,488.3L1829.8,488.3L1742.4,654.5L1740.9,654.5ZM1844.8,488.3L1846.3,488.3L1758.9,654.5L1757.4,654.5ZM1861.3,488.3L1862.8,488.3L1775.4,654.5L1773.9,654.5ZM1877.8,488.3L1879.3,488.3L1791.9,654.5L1790.4,654.5Z" fill="#808080"/>
</g>
<!-- labels -->
<g font-family="Liberation Sans, sans-serif" fill="#ffffff" font-size="30">
<text x="596" y="292" textLength="408" lengthAdjust="spacingAndGlyphs">Interlocking beam layers = 2</text>
<text x="1306" y="292" textLength="421" lengthAdjust="spacingAndGlyphs">Interlocking beam layers = 10</text>
</g>
<!-- green arrows -->
<g fill="#6ff08f">
<path d="M500,574.5H556V567L592,580L556,593V585H500A5,5 0 0 1 500,574.5Z"/>
<path d="M1523,574.5H1578V567L1614,580L1578,593V585H1523A5,5 0 0 1 1523,574.5Z"/>
</g>
<!-- thumbnail panel -->
<rect x="428" y="93" width="127" height="360" rx="5" fill="rgba(255,255,255,0.37)"/>
<rect x="440" y="106" width="100" height="50" fill="rgba(0,0,0,0.06)"/>
<rect x="440" y="156" width="100" height="50" fill="rgba(0,0,0,0.34)"/>
<g stroke="#b9e0c8" fill="none" stroke-width="4">
<path d="M470,137V127.500Q470,123 474.500,123H505.500Q510,123 510,127.500V137M470,150V159.500Q470,164 474.500,164H505.500Q510,164 510,159.500V150"/>
</g>
<g fill="#b9e0c8"><rect x="478" y="135" width="4.500" height="18"/><rect x="487.500" y="130" width="4.500" height="23"/><rect x="497" y="140" width="4.500" height="13"/></g>
<rect x="440" y="220" width="100" height="100" fill="rgba(0,0,0,0.30)"/>
<text x="450" y="242" font-family="Liberation Sans, sans-serif" font-size="14" fill="#fff">1</text>
<g>
<polygon points="456.6,265.8 463.8,261.2 474.0,268.0 472.9,284.9 455.9,283.8" fill="#a9a9a9"/>
<polygon points="456.6,265.8 463.8,261.2 474.0,268.0 466.1,273.2" fill="#cdcdcd"/>
<polygon points="466.1,256.1 483.0,257.4 482.3,280.4 475.1,279.3 474.7,267.3 470.2,265.1 464.3,267.3" fill="#1d3bc0"/>
<polygon points="474.7,267.3 482.3,263.5 482.3,280.4 475.1,279.3" fill="#162c98"/>
<polygon points="509.4,261.9 516.8,260.1 520.2,263.5 516.8,272.5 509.4,271.4" fill="#b5b5b5"/>
<polygon points="512.3,265.1 522.5,263.5 522.0,274.8 512.3,275.5" fill="#1d3bc0"/>
<polygon points="513.9,266.0 516.2,265.8 516.2,268.2 513.9,268.5" fill="#5f7df0"/>
</g>
<rect x="435.500" y="329.500" width="109" height="109" rx="3" fill="rgba(200,200,200,0.3)" stroke="#3b9bea" stroke-width="1.6"/>
<text x="450" y="356" font-family="Liberation Sans, sans-serif" font-size="14" fill="#fff">2</text>
<g>
<polygon points="468.8,375.6 489.1,377.9 489.1,387.6 486.4,405.6 480.1,403.4 480.1,384.2 468.8,383.1" fill="#1d3bc0"/>
<polygon points="480.1,384.2 489.1,387.6 486.4,405.6 480.1,403.4" fill="#162c98"/>
<polygon points="459.3,382.4 480.1,384.2 478.5,395.9 457.5,395.5" fill="#ebebeb"/>
<polygon points="457.5,395.5 478.5,395.9 478.5,411.7 458.2,409.5" fill="#bcbcbc"/>
<polygon points="500.4,353.1 520.7,356.0 520.2,370.7 516.8,383.1 510.1,381.9 509.0,370.7 499.9,361.6" fill="#1d3bc0"/>
<polygon points="509.0,370.7 520.2,370.7 516.8,383.1 510.1,381.9" fill="#162c98"/>
<polygon points="491.4,360.0 509.0,370.7 509.0,376.5 489.1,372.9" fill="#ebebeb"/>
<polygon points="489.1,372.9 509.0,376.5 509.0,389.1 489.8,387.6" fill="#bcbcbc"/>
</g>
<!-- slicing result -->
<rect x="1317" y="68" width="459" height="32" fill="#1b1b1b"/>
<path d="M1345.3,68V100M1460.8,68V100M1576.300,68V100M1691.800,68V100" stroke="#242525" stroke-width="1"/>
<text x="1329" y="88" font-family="Liberation Sans, sans-serif" font-size="12.500" font-weight="bold" fill="#fff" textLength="82" lengthAdjust="spacingAndGlyphs">Slicing Result</text>
<path d="M1759.500,79L1765,83.500L1770.500,79M1759.500,84L1765,88.500L1770.500,84" stroke="#fff" stroke-width="1.3" fill="none"/>
<!-- vertical slider -->
<rect x="1853.800" y="187" width="24.400" height="712" rx="12.200" fill="#fff"/>
<rect x="1860.200" y="193" width="12" height="330" rx="6" fill="#d0d0d0"/>
<rect x="1860.200" y="510" width="12" height="380" fill="#00ae42"/>
<circle cx="1866.200" cy="510" r="11" fill="#fff"/><circle cx="1866.200" cy="510" r="9" fill="#00ae42"/>
<path d="M1860.900,510H1871.500M1866.200,504.700V515.300" stroke="#fff" stroke-width="1.300"/>
<circle cx="1866.200" cy="886.500" r="11.700" fill="#fff"/><circle cx="1866.200" cy="886.500" r="9.500" fill="#00ae42"/>
<path d="M1802,477.500Q1802,475.500 1804,475.500H1844Q1846,475.500 1846,477.500V505L1853,511H1804Q1802,511 1802,509Z" fill="#fff"/>
<g font-family="Liberation Sans, sans-serif" font-size="12.500" fill="#00ae42" text-anchor="middle">
<text x="1824" y="490">110</text><text x="1823" y="505">22.00</text>
</g>
<path d="M1806,889.500Q1806,887.500 1808,887.500H1845L1853,886L1845,893V918.500Q1845,920.500 1843,920.500H1808Q1806,920.500 1806,918.500Z" fill="#fff"/>
<g font-family="Liberation Sans, sans-serif" font-size="12.500" fill="#00ae42" text-anchor="middle">
<text x="1826" y="901">1</text><text x="1825.500" y="916">0.20</text>
</g>
<!-- horizontal slider -->
<rect x="726" y="972" width="827" height="24.500" rx="12.200" fill="#fff"/>
<rect x="732" y="978" width="808" height="12.500" rx="6.200" fill="#00ae42"/>
<circle cx="1540.500" cy="984.200" r="11.800" fill="#fff"/><circle cx="1540.500" cy="984.200" r="9.600" fill="#00ae42"/>
<path d="M1556,984L1560,980.500V976Q1560,974 1562,974H1590Q1592,974 1592,976V991.500Q1592,993.500 1590,993.500H1562Q1560,993.500 1560,991.500V987.500Z" fill="#fff"/>
<text x="1575.500" y="988.500" font-family="Liberation Sans, sans-serif" font-size="12.500" fill="#00ae42" text-anchor="middle">636</text>
<!-- warning -->
<rect x="1401.500" y="879.500" width="374" height="73.500" rx="4" fill="#fff" stroke="#f5a968" stroke-width="1.2"/>
<path d="M1405,879.500H1410V953H1405Q1401.500,953 1401.500,949.500V883Q1401.500,879.500 1405,879.500Z" fill="#f7a968"/>
<g font-family="Liberation Sans, sans-serif" font-size="12.600" fill="#3a3a3a">
<text x="1416" y="898">Warning:</text>
<text x="1416" y="913" textLength="284" lengthAdjust="spacingAndGlyphs">PLA and PETG filaments detected in the mixture.</text>
<text x="1416" y="928" textLength="295" lengthAdjust="spacingAndGlyphs">Adjust parameters according to the Wiki to ensure</text>
<text x="1416" y="943" textLength="73" lengthAdjust="spacingAndGlyphs">print quality.</text>
<text x="1494" y="943" fill="#00ae42" textLength="109" lengthAdjust="spacingAndGlyphs" text-decoration="underline">Click Wiki for help.</text>
</g>
<circle cx="1755" cy="898" r="12.500" fill="#ebebeb"/>
<path d="M1748.500,891.500L1761.500,904.500M1761.500,891.500L1748.500,904.500" stroke="#777" stroke-width="1.2"/>
<circle cx="1761" cy="941" r="5" fill="#ececec"/><path d="M1758,941H1764" stroke="#bbb" stroke-width="1"/>
<!-- view cube -->
<polygon points="459,909 523,909 523,941 459,941" fill="#c9c9c9"/>
<polygon points="459,941 523.500,941 523.500,999 459,999" fill="#c4c4c4"/>
<path d="M459,941H523" stroke="#a9a9a9" stroke-width="1"/>
<g font-family="Liberation Sans, sans-serif" font-size="10.500" fill="#444" text-anchor="middle">
<text x="490.500" y="935" textLength="22" lengthAdjust="spacingAndGlyphs">Top</text><text x="490.500" y="980" textLength="31" lengthAdjust="spacingAndGlyphs">Front</text></g>
<path d="M459.500,1000V958" stroke="#807ecf" stroke-width="3"/><polygon points="459,947 454,960 464,960" fill="#8684d6"/>
<path d="M458,999H518" stroke="#d08088" stroke-width="3"/><polygon points="529,999 516,994 516,1004.500" fill="#d6868e"/>
<text x="538" y="1002" font-family="Liberation Sans, sans-serif" font-size="10" fill="#c0666c">x</text>
<text x="453" y="943" font-family="Liberation Sans, sans-serif" font-size="10" fill="#7ab0c0">y</text>
<!-- camera button -->
<circle cx="581.500" cy="986" r="18" fill="#e2e2e2"/>
<g stroke="#555" stroke-width="1.300" fill="none">
<path d="M572.500,982V979.500Q572.500,977 575,977H577.500M585.500,977H588Q590.500,977 590.500,979.500V982M590.500,990V992.500Q590.500,995 588,995H585.500M577.500,995H575Q572.500,995 572.500,992.500V990"/>
<path d="M581.500,980L587,983V989L581.500,992L576,989V983ZM576,983L581.500,986L587,983M581.500,986V992"/>
</g>
<!-- layers icon -->
<g stroke="#8fdcab" stroke-width="1.2" stroke-linejoin="round">
<path d="M1855,989.500L1866,995L1877,989.500L1866,984Z" fill="#00ae42"/>
<path d="M1855,985L1866,990.500L1877,985L1866,979.500Z" fill="#00ae42"/>
<path d="M1855,980.500L1866,986L1877,980.500L1866,975Z" fill="#00ae42"/>
</g>
<!-- bottom strip -->
<rect x="427" y="1018" width="1474" height="1" fill="#5b5e5f"/>
<rect x="427" y="1018" width="115" height="1" fill="#9a9c9c"/>
<rect x="556" y="1018" width="80" height="1" fill="#1fb455"/>

</svg>
<div id="titlebar" class="abs"></div>
<div id="tabbar" class="abs"></div>
<div class="abs" style="left:178px;top:32px;width:136px;height:36px;background:#00ae42"></div>
<!-- title bar content -->
<svg style="left:0;top:0" width="1901" height="68" viewBox="0 0 1901 68">
<g stroke="#e6e6e6" stroke-width="1.400" fill="none">
<path d="M15,10.500H30M15,16.500H30M15,22H30"/>
<path d="M75.500,14.500L81,19.500L86.500,14.500"/>
</g>
<path d="M106.500,5V27" stroke="#5a6062" stroke-width="1"/>
<path d="M131.500,9.500H141L145.500,14V22.500H131.500ZM134.500,9.500V14H140.500V9.500" stroke="#e6e6e6" stroke-width="1.500" fill="none"/><rect x="133.500" y="18.500" width="10" height="4" fill="#e6e6e6"/>
<path d="M169,15.500L177,9.500V13.200C182,13.200 185,16 185.500,22C183.500,19 181,18 177,18V21.500Z" fill="#b9bcbd"/>
<path d="M224,15.500L216,9.500V13.200C211,13.200 208,16 207.500,22C209.500,19 212,18 216,18V21.500Z" fill="#b9bcbd"/>
<path d="M1809,15.500H1820" stroke="#e6e6e6" stroke-width="1.200"/>
<rect x="1840.500" y="10.500" width="13" height="11" fill="none" stroke="#e6e6e6" stroke-width="1.200"/><path d="M1840.500,13H1853.500" stroke="#e6e6e6" stroke-width="1.200"/>
<path d="M1875.500,11.500L1884.500,20.500M1884.500,11.500L1875.500,20.500" stroke="#e6e6e6" stroke-width="1.200"/>
<!-- home -->
<path d="M21.500,40L11.500,49.500H14V59.500H19.500V53H23.500V59.500H29V49.500H31.500Z" fill="#fff"/>
<!-- prepare icon -->
<g stroke="#e8e8e8" stroke-width="1.500" fill="none" stroke-linejoin="round">
<path d="M78,42L85.500,46V54L78,58L70.500,54V46ZM70.500,46L78,50L85.500,46M78,50V50.100"/>
<path d="M70.500,46L78,50.500L85.500,46"/>
<!-- preview icon -->
<path d="M214,42L221.500,45.800L214,49.600L206.500,45.800Z"/><path d="M206.500,50L214,53.800L221.500,50M206.500,54L214,57.800L221.500,54"/>
<!-- device icon -->
<path d="M346.500,43.500H352.500V48H346.500ZM357,43.500H362.500V46M346.500,52V57.500H350M356.500,51.500H362.500V57.500H356.500ZM359,54.500H360"/>
<!-- project icon -->
<rect x="482" y="43" width="15" height="14" rx="1.500"/><path d="M485,47H486M488.500,47H494M485,50H486M488.500,50H494M485,53H486M488.500,53H494"/>
<!-- calibration icon -->
<circle cx="611" cy="50" r="4.600"/><path d="M611,43V45.400M611,54.600V57M604,50H606.400M615.600,50H618M606,45L607.700,46.700M614.300,53.300L616,55M616,45L614.300,46.700M607.700,53.300L606,55M609,50H613M611,48V52"/>
</g>
<!-- right pills -->
<rect x="1476" y="38" width="78" height="24" rx="12" fill="#262d30"/>
<g stroke="#f0f0f0" stroke-width="1.200" fill="none"><circle cx="1499.500" cy="50" r="2"/><circle cx="1499.500" cy="50" r="4.700"/><path d="M1499.500,42.500A7.500,7.500 0 1 0 1507,50M1499.500,42.500A7.500,7.500 0 0 1 1507,50V56"/></g>
<rect x="1522.500" y="43.500" width="5.500" height="13" fill="#1fc05a"/><rect x="1529.500" y="50.500" width="6" height="6" fill="#1fc05a"/><rect x="1531" y="43.500" width="4.500" height="4.500" fill="#a070e8"/>
<path d="M1559.500,39V61" stroke="#5a6264" stroke-width="1"/>
<rect x="1583" y="38" width="123" height="24" rx="12" fill="#6c6f70"/>
<path d="M1583,38H1596V62H1583A12,12 0 0 1 1583,38Z" fill="#00ae42"/>
<path d="M1596.500,38V62" stroke="#3b4446" stroke-width="1"/>
<path d="M1581.500,48.500L1585,51.500L1588.500,48.500" stroke="#fff" stroke-width="1.200" fill="none"/>
<rect x="1721" y="38" width="137" height="24" rx="12" fill="#00ae42"/>
<path d="M1745.500,38V62" stroke="#3b4446" stroke-width="1"/>
<path d="M1731.500,48.500L1735,51.500L1738.500,48.500" stroke="#fff" stroke-width="1.200" fill="none"/>
</svg>
<div class="t" style="left:35px;top:10px;font-size:13px;color:#f0f0f0;letter-spacing:-0.69px">File</div>
<div class="t" style="left:906px;top:10px;width:200px;text-align:center;font-size:12px;color:#e8e8e8">Beam interlock</div>
<div class="t" style="left:97px;top:42px;font-size:15.500px;color:#eee;letter-spacing:-0.18px">Prepare</div>
<div class="t" style="left:233px;top:42px;font-size:15.500px;color:#fff;letter-spacing:-0.08px">Preview</div>
<div class="t" style="left:373px;top:42px;font-size:15.500px;color:#eee;letter-spacing:-0.15px">Device</div>
<div class="t" style="left:508px;top:42px;font-size:15.500px;color:#eee;letter-spacing:-0.01px">Project</div>
<div class="t" style="left:630px;top:42px;font-size:15.500px;color:#eee;letter-spacing:0.31px">Calibration</div>
<div class="t" style="left:1612px;top:42px;font-size:15.500px;color:#a3a5a5;letter-spacing:-0.0px">Slice plate</div>
<div class="t" style="left:1762px;top:42px;font-size:15.500px;color:#fff;letter-spacing:0.34px">Print plate</div>

<!-- LEFT PANEL -->
<div id="left" class="abs"></div>
<div class="abs" style="left:0;top:68px;width:2px;height:951px;background:#4d5f82"></div>
<div id="leftin" class="abs"></div>
<div class="abs" style="left:0;top:1017px;width:250px;height:2px;background:#2f6fc2"></div><div class="abs" style="left:250px;top:1017px;width:177px;height:2px;background:#c4c4c4"></div>
<!-- Printer header -->
<div class="hdr" style="top:68px;height:32px"></div>
<div class="t" style="left:38px;top:75px;font-size:15px;color:#262e30;letter-spacing:0.47px">Printer</div>
<!-- printer cards -->
<div class="card" style="left:7px;top:104px;width:211px;height:97px"></div>
<div class="gc" style="left:200px;top:104px"></div>
<div class="card" style="left:223px;top:104px;width:95px;height:97px"></div>
<div class="card" style="left:322px;top:104px;width:96px;height:98px;background:#f8f8f8;border-color:#d9d9d9;border-radius:8px"></div>
<div class="t" style="left:66px;top:173px;font-size:15px;letter-spacing:0.09px">Bambu Lab H2D</div>
<div class="t" style="left:248px;top:173px;font-size:15px;letter-spacing:0.03px">Texture...</div>
<div class="t" style="left:338px;top:163px;font-size:15px;letter-spacing:0.21px">Sync info</div>
<!-- nozzle cards -->
<div class="card" style="left:7px;top:213px;width:203px;height:126px;border-radius:3px"></div>
<div class="gc" style="left:192px;top:213px"></div>
<div class="card" style="left:215px;top:213px;width:203px;height:126px;border-radius:3px"></div>
<div class="gc" style="left:400px;top:213px"></div>
<div class="t" style="left:13px;top:223px;font-size:12.500px;color:#8d8d8d;letter-spacing:0.41px">Left Nozzle</div>
<div class="t" style="left:221px;top:223px;font-size:12.500px;color:#8d8d8d;letter-spacing:0.44px">Right Nozzle</div>
<div class="t" style="left:13px;top:252px;font-size:14.500px;letter-spacing:-0.04px">AMS</div>
<div class="t" style="left:88px;top:252px;font-size:14.500px;letter-spacing:0.68px">Not installed</div>
<div class="t" style="left:221px;top:252px;font-size:14.500px;letter-spacing:-0.04px">AMS</div>
<div class="t" style="left:271px;top:252px;font-size:14.500px;letter-spacing:0.67px">Not installed</div>
<div class="t" style="left:13px;top:283px;font-size:14.500px;letter-spacing:0.61px">Diameter</div>
<div class="t" style="left:221px;top:283px;font-size:14.500px;letter-spacing:0.6px">Diameter</div>
<div class="t" style="left:13px;top:311px;font-size:14.500px;letter-spacing:0.34px">Flow</div>
<div class="t" style="left:221px;top:311px;font-size:14.500px;letter-spacing:0.34px">Flow</div>
<div class="dd" style="left:95px;top:279px;width:108px;height:26px"></div>
<div class="dd" style="left:95px;top:307px;width:108px;height:26px"></div>
<div class="dd" style="left:303px;top:279px;width:108px;height:26px"></div>
<div class="dd" style="left:303px;top:307px;width:108px;height:26px"></div>
<div class="t" style="left:118px;top:284px;font-size:14.500px;letter-spacing:0.14px">0.4</div>
<div class="t" style="left:118px;top:312px;font-size:14.500px;letter-spacing:0.64px">Standard</div>
<div class="t" style="left:326px;top:284px;font-size:14.500px;letter-spacing:0.01px">0.4</div>
<div class="t" style="left:326px;top:312px;font-size:14.500px;letter-spacing:0.64px">Standard</div>
<!-- Project filaments -->
<div class="hdr" style="top:344px;height:32px;border-top:1px solid #d4d4d4"></div>
<div class="t" style="left:38px;top:351px;font-size:15px;letter-spacing:0.21px">Project Filaments</div>
<div class="abs" style="left:194px;top:350px;width:98px;height:19px;border:1px solid #f29a5c;border-radius:10px;background:#fdf3ec"></div>
<div class="t" style="left:200px;top:354px;font-size:11px;color:#ee7a3a;letter-spacing:0.04px">Flushing volumes</div>
<!-- filaments -->
<div class="abs" style="left:12px;top:399px;width:20px;height:20px;background:#1f3fcf"></div>
<div class="t" style="left:18px;top:402px;font-size:14px;color:#fff">1</div>
<div class="dd" style="left:38px;top:394px;width:136px;height:30px"></div>
<div class="t" style="left:81px;top:402px;font-size:13px;letter-spacing:0.17px">PLA Lite</div>
<div class="abs" style="left:222px;top:399px;width:20px;height:20px;background:#fff;border:1px solid #222"></div>
<div class="t" style="left:228px;top:402px;font-size:14px;color:#111">2</div>
<div class="dd" style="left:248px;top:394px;width:136px;height:30px"></div>
<div class="gc" style="left:366px;top:394px"></div>
<div class="t" style="left:272px;top:402px;font-size:13px;letter-spacing:-0.28px">Generic PETG</div>
<!-- Process -->
<div class="hdr" style="top:443px;height:31px;border-top:1px solid #d4d4d4"></div>
<div class="t" style="left:38px;top:449px;font-size:15px;letter-spacing:-0.21px">Process</div>
<div class="abs" style="left:99px;top:447px;width:105px;height:22px;border-radius:11px;background:#dadada"></div>
<div class="abs" style="left:149px;top:448px;width:54px;height:20px;border-radius:10px;background:#00ae42"></div>
<div class="t" style="left:109px;top:452px;font-size:12px;color:#7d7d7d;letter-spacing:-0.06px">Global</div>
<div class="t" style="left:155px;top:452px;font-size:12px;color:#fff;letter-spacing:0.09px">Objects</div>
<div class="t" style="left:255px;top:449px;font-size:15px;letter-spacing:0.05px">Advanced</div>
<div class="abs" style="left:325px;top:450px;width:28px;height:16px;border-radius:8px;background:#00ae42"></div>
<div class="abs" style="left:339px;top:452px;width:12px;height:12px;border-radius:6px;background:#fff"></div>
<!-- search -->
<div class="abs" style="left:3px;top:474px;width:419px;height:23px;background:#fff;border-bottom:1px solid #9a9a9a"></div>
<div class="t" style="left:28px;top:479px;font-size:11.500px;color:#4a4a4a;letter-spacing:0.09px">Search plate, object and part.</div>
<!-- tree -->
<div class="abs" style="left:2px;top:497px;width:421px;height:194px;background:#fff;border:1px solid #3a3a3a;border-top:1px solid #6a6a6a"></div>
<div class="abs" style="left:294px;top:498px;width:1px;height:22px;background:#e4e4e4"></div>
<div class="abs" style="left:323px;top:498px;width:1px;height:22px;background:#e4e4e4"></div>
<div class="abs" style="left:373px;top:498px;width:1px;height:22px;background:#e4e4e4"></div>
<div class="abs" style="left:403px;top:498px;width:1px;height:192px;background:#e9e9e9"></div>
<div class="abs" style="left:404px;top:498px;width:18px;height:192px;background:#fafafa"></div>
<div class="abs" style="left:3px;top:587px;width:400px;height:22px;background:#a2a2a2"></div>
<div class="abs" style="left:413px;top:601px;width:2px;height:72px;background:#555"></div>
<div class="t" style="left:9px;top:503px;font-size:12.500px;color:#111;letter-spacing:0.41px">Name</div>
<div class="t" style="left:337px;top:503px;font-size:12.500px;color:#111;letter-spacing:-0.2px">Fila.</div>
<div class="t" style="left:30px;top:526px;font-size:12.500px;color:#111;letter-spacing:0.24px">Assembly</div>
<div class="t" style="left:58px;top:548px;font-size:12.500px;color:#111;letter-spacing:0.2px">Cube</div>
<div class="t" style="left:58px;top:570px;font-size:12.500px;color:#111;letter-spacing:0.2px">Cube</div>
<div class="t" style="left:30px;top:592px;font-size:12.500px;color:#111;letter-spacing:0.24px">Assembly</div>
<div class="t" style="left:58px;top:614px;font-size:12.500px;color:#111;letter-spacing:0.2px">Cube</div>
<div class="t" style="left:58px;top:636px;font-size:12.500px;color:#111;letter-spacing:0.2px">Cube</div>
<div class="t" style="left:22px;top:658px;font-size:12.500px;color:#111;letter-spacing:0.5px">Outside</div>
<!-- fila boxes -->
<div class="abs" style="left:327px;top:523px;width:44px;height:20px;background:#fff;border:1px solid #222"></div>
<div class="abs" style="left:327px;top:545px;width:44px;height:20px;background:#fff;border:1px solid #222"></div>
<div class="abs" style="left:327px;top:567px;width:44px;height:20px;background:#1f3fcf"></div>
<div class="abs" style="left:327px;top:589px;width:44px;height:20px;background:#fff;border:1px solid #222"></div>
<div class="abs" style="left:327px;top:611px;width:44px;height:20px;background:#fff;border:1px solid #222"></div>
<div class="abs" style="left:327px;top:633px;width:44px;height:20px;background:#1f3fcf"></div>
<div class="t" style="left:344px;top:526px;font-size:14px;color:#111">2</div>
<div class="t" style="left:344px;top:548px;font-size:14px;color:#111">2</div>
<div class="t" style="left:344px;top:570px;font-size:14px;color:#fff">1</div>
<div class="t" style="left:344px;top:592px;font-size:14px;color:#111">2</div>
<div class="t" style="left:344px;top:614px;font-size:14px;color:#111">2</div>
<div class="t" style="left:344px;top:636px;font-size:14px;color:#fff">1</div>
<!-- checkboxes -->
<div class="abs" style="left:302px;top:526px;width:13px;height:13px;background:#00ae42"></div>
<div class="abs" style="left:302px;top:592px;width:13px;height:13px;background:#00ae42"></div>
<!-- tabs -->
<div class="abs" style="left:2px;top:691px;width:421px;height:26px;background:#fff;border-bottom:1px solid #d9d9d9"></div>
<div class="t" style="left:16px;top:694px;font-size:15px;color:#7b7b7b;letter-spacing:0.27px">Frequent</div>
<div class="t" style="left:93px;top:694px;font-size:15px;color:#7b7b7b;letter-spacing:0.39px">Quality</div>
<div class="t" style="left:157px;top:694px;font-size:15px;color:#7b7b7b;letter-spacing:0.61px">Strength</div>
<div class="t" style="left:233px;top:694px;font-size:15px;color:#7b7b7b;letter-spacing:-0.05px">Speed</div>
<div class="t" style="left:291px;top:694px;font-size:15px;color:#7b7b7b;letter-spacing:0.52px">Support</div>
<div class="t" style="left:363px;top:694px;font-size:15px;color:#ee6a3c;font-weight:bold;letter-spacing:-0.16px">Others</div>
<div class="abs" style="left:360px;top:713px;width:54px;height:3px;border-radius:2px;background:#00ae42"></div>
<!-- settings -->
<div class="abs" style="left:404px;top:727px;width:18px;height:290px;background:#f4f4f4"></div>
<div class="abs" style="left:413px;top:896px;width:2px;height:103px;background:#666"></div>
<div class="abs" style="left:252px;top:717px;width:120px;height:11px;border:1px solid #dcdcdc;border-top:none"></div>
<div class="abs" style="left:52px;top:717px;width:10px;height:5px;overflow:hidden"><div class="t" style="left:0;top:-9px;font-size:15px">y</div></div>
<div class="t" style="left:35px;top:752px;font-size:15px;font-weight:bold;color:#1f2528;letter-spacing:-0.26px">Advanced</div>
<div class="abs" style="left:110px;top:760px;width:285px;height:1px;background:#e9e9e9"></div>
<div class="t" style="left:32px;top:784px;font-size:15px;letter-spacing:0.28px">Use beam interlocking</div>
<div class="t" style="left:32px;top:814px;font-size:15px;letter-spacing:0.45px">Interlocking beam width</div>
<div class="t" style="left:32px;top:844px;font-size:15px;letter-spacing:0.48px">Interlocking direction</div>
<div class="t" style="left:32px;top:874px;font-size:15px;color:#f0764a;letter-spacing:0.27px">Interlocking beam layers</div>
<div class="t" style="left:32px;top:904px;font-size:15px;letter-spacing:0.47px">Interlocking depth</div>
<div class="t" style="left:32px;top:934px;font-size:15px;letter-spacing:0.46px">Interlocking boundary</div>
<div class="t" style="left:32px;top:952px;font-size:15px;letter-spacing:0.15px">avoidance</div>
<div class="abs" style="left:253px;top:784px;width:16px;height:16px;background:#00ae42;border-radius:1px"></div>
<div class="inp" style="top:809px"></div>
<div class="inp" style="top:839px"></div>
<div class="inp" style="top:869px"></div>
<div class="inp" style="top:899px"></div>
<div class="inp" style="top:937px"></div>
<div class="t" style="left:260px;top:815px;font-size:14.500px;color:#111;letter-spacing:-0.09px">0.8</div>
<div class="t" style="left:342px;top:819px;font-size:11px;color:#8a8a8a;letter-spacing:0.59px">mm</div>
<div class="t" style="left:260px;top:845px;font-size:14.500px;color:#111;letter-spacing:0.12px">22.5</div>
<div class="t" style="left:357px;top:846px;font-size:11px;color:#8a8a8a">°</div>
<div class="t" style="left:277px;top:875px;font-size:14.500px;color:#111;letter-spacing:0.18px">10</div>
<div class="t" style="left:277px;top:905px;font-size:14.500px;color:#111">2</div>
<div class="t" style="left:277px;top:943px;font-size:14.500px;color:#111">8</div>
<!-- left panel icons -->
<svg style="left:0;top:68px" width="427" height="951" viewBox="0 68 427 951">
<!-- printer header icon -->
<g stroke="#5a6466" stroke-width="1.200" fill="none"><path d="M12.500,78.500H24.500V90.500H12.500ZM12.500,78.500L15.500,76H27.500V88L24.500,90.500M24.500,78.500L27.500,76"/></g>
<path d="M15,88.500L22,85V88.500Z" fill="#00ae42"/>
<!-- gear -->
<g id="gear" stroke="#333" stroke-width="1.500" fill="none" transform="translate(398.5,83.2) scale(0.84) translate(-398.5,-83.5)"><circle cx="398.500" cy="83" r="2.300"/><path d="M397.300,76.500H399.700L400.300,78.300L401.900,79L403.600,78.100L405.300,79.800L404.400,81.500L405.100,83.100V83.100L406.900,83.700V84.300L405.100,84.900 404.400,86.500 405.300,88.200 403.600,89.900 401.900,89 400.300,89.700 399.700,91.500H397.300L396.700,89.700 395.100,89 393.400,89.900 391.700,88.200 392.600,86.500 391.900,84.900 390.100,84.300V81.700L391.900,81.100 392.600,79.500 391.700,77.800 393.400,76.100 395.100,77 396.700,76.300Z" transform="translate(0,-0.500)"/></g>
<!-- green corner checks -->
<g stroke="#fff" stroke-width="1.100" fill="none">
<path d="M207.500,109.500L210,112L214.500,107"/>
<path d="M199.500,218.500L202,221L206.500,216"/>
<path d="M407.500,218.500L410,221L414.500,216"/>
<path d="M373.500,399.500L376,402L380.500,397"/>
</g>
<!-- printer image -->
<rect x="90" y="120" width="30" height="40" rx="1.500" fill="#1b1b1b"/>
<rect x="118" y="121" width="11" height="38" fill="#9c9c9c"/>
<rect x="120.500" y="124" width="6.500" height="13" fill="#222"/>
<rect x="92" y="123" width="25" height="22" fill="#2e2e2e"/><rect x="92" y="146" width="25" height="1.500" fill="#555"/>
<!-- plate image -->
<rect x="247" y="120" width="45" height="43" rx="2" fill="#c8ad6a"/><rect x="249" y="122" width="41" height="38" fill="#cdb373"/><rect x="262" y="161" width="16" height="3" fill="#fff"/>
<circle cx="302" cy="123.500" r="5.300" fill="none" stroke="#555" stroke-width="1"/><path d="M302,122.500V126.500M302,120.300V121.300" stroke="#555" stroke-width="1.100"/>
<!-- chevrons small -->
<g stroke="#8a8a8a" stroke-width="1.100" fill="none">
<path d="M50,179L54.500,183L59,179"/><path d="M232,179L236.500,183L241,179"/>
<path d="M103,289.500L107.500,293.500L112,289.500"/><path d="M103,317.500L107.500,321.500L112,317.500"/>
<path d="M311,289.500L315.500,293.500L320,289.500"/><path d="M311,317.500L315.500,321.500L320,317.500"/>
<path d="M46,406.500L50.500,410.500L55,406.500"/><path d="M256,406.500L260.500,410.500L265,406.500"/>
</g>
<!-- sync icon -->
<g stroke="#222" stroke-width="1.700" fill="none"><path d="M359,137A11,11 0 0 1 379.500,136"/><path d="M380,144A11,11 0 0 1 359.500,145"/></g>
<path d="M376,136.500L383.500,137.500L381,130.500Z" fill="#222"/><path d="M363,144.500L355.500,143.500L358,150.500Z" fill="#222"/>
<!-- filaments header icons -->
<g stroke="#5a6466" stroke-width="1.200" fill="none"><path d="M15,353C12,356 12,362 15,365M18.500,353C16.500,356 16.500,362 18.500,365M18.500,353H24M18.500,365H24"/></g>
<g stroke="#00ae42" stroke-width="1.200" fill="none"><path d="M21.500,353C19.500,356 19.500,362 21.500,365M24.500,353C22.500,356 22.500,362 24.500,365"/></g>
<g stroke="#333" stroke-width="1.300" fill="none"><path d="M306.500,359H318.500M312.500,353V365"/><path d="M334,359H346"/>
<path d="M361.500,355H374V358M361.500,355V364.500H367M361.500,358H374M364.500,353V355M368,353V355M371,353V355"/><circle cx="372" cy="363.500" r="4"/><path d="M370,362.500H374M370,364.500H374"/></g>
<use href="#gear" transform="translate(0,276)"/>
<!-- filament type icon -->
<rect x="65" y="403" width="4.500" height="6" fill="#222"/><rect x="70.500" y="403" width="5" height="6" fill="#222"/><rect x="65" y="410" width="4.500" height="5.500" fill="#222"/><rect x="70.500" y="410" width="5" height="5.500" fill="#222"/>
<!-- ellipsis circles -->
<g stroke="#333" stroke-width="1.100" fill="none"><circle cx="188" cy="408.500" r="6.700"/><circle cx="398" cy="408.500" r="6.700"/></g>
<g fill="#333"><circle cx="185" cy="408.500" r="0.900"/><circle cx="188" cy="408.500" r="0.900"/><circle cx="191" cy="408.500" r="0.900"/><circle cx="395" cy="408.500" r="0.900"/><circle cx="398" cy="408.500" r="0.900"/><circle cx="401" cy="408.500" r="0.900"/></g>
<!-- process icon -->
<g stroke="#5a6466" stroke-width="1.200" fill="none" stroke-linejoin="round"><path d="M14,453.500L26.500,452L24.500,456.500L12.500,458Z"/></g>
<g stroke="#00ae42" stroke-width="1.200" fill="none" stroke-linejoin="round"><path d="M12.500,461.500L24.500,460L26.500,456.500M12.500,465L24.500,463.500L26.500,460"/></g>
<g stroke="#333" stroke-width="1.300" fill="none"><path d="M367.500,453.500H377M367.500,458.500H377M367.500,463.500H377"/><path d="M363,453.500H364.500M363,458.500H364.500M363,463.500H364.500"/>
<path d="M392,464L404,452M393,453.500H398M399,464.500L402,461.500L405,464.500M399,460.500L402,463.500"/></g>
<!-- search icons -->
<g stroke="#444" stroke-width="1.800" fill="none"><circle cx="13.500" cy="484" r="4.600"/><path d="M17,487.500L20.500,491"/></g>
<circle cx="407.500" cy="485.500" r="6.800" fill="#8e8e8e"/><path d="M404.500,482.500L410.500,488.500M410.500,482.500L404.500,488.500" stroke="#fff" stroke-width="1.400"/>
<!-- tree chevrons -->
<g stroke="#222" stroke-width="1.400" fill="none"><path d="M13.500,530.500L18,535L22.500,530.500"/><path d="M13.500,596.500L18,601L22.500,596.500"/><path d="M9,660.500L12.500,664.500L9,668.500" stroke="#666" stroke-width="1.100"/></g>
<!-- cube part icons -->
<g id="pi" ><path d="M46,550H40.500Q38.500,550 38.500,552V559Q38.500,561 40.500,561H47.500Q49.500,561 49.500,559V555" stroke="#555" stroke-width="1.100" fill="none"/><path d="M46.500,549.500H52.500M49.500,546.500V552.500" stroke="#00ae42" stroke-width="1.200"/></g>
<use href="#pi" transform="translate(0,22)"/><use href="#pi" transform="translate(0,66)"/><use href="#pi" transform="translate(0,88)"/>
<!-- checks -->
<g stroke="#fff" stroke-width="1.300" fill="none"><path d="M304.500,532.500L307.500,535.500L312.500,529.500"/><path d="M304.500,598.500L307.500,601.500L312.500,595.500"/><path d="M256.500,792L260,795.500L266,788.500" stroke-width="1.500"/></g>
<!-- locks -->
<g id="lk"><rect x="384.500" y="531.500" width="9" height="7.500" rx="1" fill="#f5811f"/><path d="M386.500,531.500V529A2.500,2.500 0 0 1 391.500,529V529.500" stroke="#f5811f" stroke-width="1.300" fill="none"/></g>
<use href="#lk" transform="translate(0,66)"/><use href="#lk" transform="translate(-148,260)"/><use href="#lk" transform="translate(-148,350)"/>
<!-- advanced icon -->
<g stroke="#555" stroke-width="1.100" fill="none"><circle cx="19" cy="759" r="2"/><circle cx="19" cy="759" r="5.500"/><path d="M19,752V753.500M19,764.500V766M12,759H13.500M24.500,759H26M14,754L15.100,755.100M22.900,762.900L24,764M24,754L22.900,755.100M15.100,762.900L14,764"/><circle cx="25" cy="764.500" r="3" fill="#fff"/></g>
<!-- spinners -->
<g stroke="#9a9a9a" stroke-width="1" fill="none">
<path d="M258.500,878.500L262,875L265.500,878.500M258.500,887L262,890.500L265.500,887"/>
<path d="M258.500,908.500L262,905L265.500,908.500M258.500,917L262,920.500L265.500,917"/>
<path d="M258.500,946.500L262,943L265.500,946.500M258.500,955L262,958.500L265.500,955"/>
</g>

<!-- collapse button -->
<rect x="423" y="68" width="24.500" height="20" fill="#d8d8d8"/>
<path d="M433.500,74.500L430,78.500L433.500,82.500M438.500,74.500L442,78.500L438.500,82.500" stroke="#555" stroke-width="1.100" fill="none"/>
<path d="M436,73V84" stroke="#777" stroke-width="1.200"/>

</svg>

</body></html>
